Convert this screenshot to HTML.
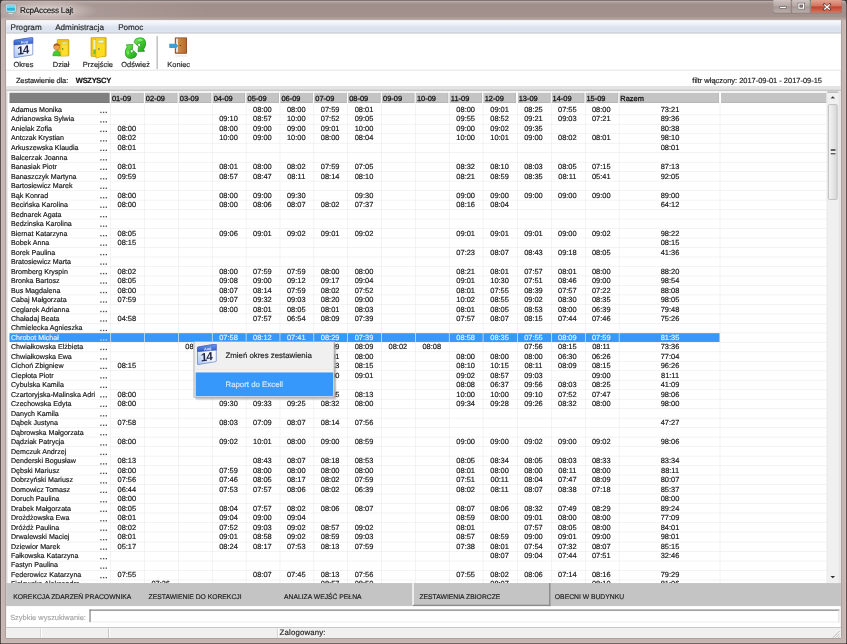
<!DOCTYPE html><html><head><meta charset="utf-8"><style>
*{margin:0;padding:0;box-sizing:border-box}
html,body{width:847px;height:644px;overflow:hidden;background:#3a3434}
#win{position:absolute;left:0;top:0;width:1251px;height:951px;transform-origin:0 0;transform:scale(0.677058,0.677182);
 font-family:"Liberation Sans",sans-serif;font-size:11px;color:#1a1a1a;overflow:hidden}
.t{filter:grayscale(1);-webkit-text-stroke:0.25px currentColor;text-rendering:geometricPrecision}
.a{position:absolute}
.t{position:absolute;white-space:nowrap;line-height:14px}
#wrap{position:absolute;left:0;top:0;width:847px;height:644px;overflow:hidden}
</style></head><body><div id="wrap"><div id="win"><div class="a" style="left:0;top:0;width:1251px;height:951px;background:#c6b5b1;border:1px solid #3c3434;border-top-color:#6e6262;border-radius:7px 7px 0 0;box-shadow:inset 0 0 0 1px #d8ccca"></div>
<div class="a" style="left:1px;top:1px;width:1249px;height:29px;background:linear-gradient(90deg,rgba(255,255,255,0.14),rgba(255,255,255,0) 25%),linear-gradient(#b4a4a0,#a08e8a 20%,#a3918d 80%,#bcaca8);border-radius:6px 6px 0 0"></div>
<div class="a" style="left:2px;top:2px;width:1247px;height:1px;background:#c0b4b2"></div>
<div class="a" style="left:0px;top:1px;width:150px;height:29px;background:radial-gradient(ellipse 75px 16px at 70px 15px,rgba(235,225,222,0.75),rgba(235,225,222,0.35) 60%,rgba(235,225,222,0))"></div>
<div class="a" style="left:8px;top:29px;width:1235px;height:914px;border:1px solid #857672;background:#fff"></div>
<svg class="a" style="left:7px;top:5px" width="18" height="17" viewBox="0 0 18 17">
<rect x="1" y="1" width="16" height="12" rx="2.5" fill="#dfe4e8" stroke="#7f8d96" stroke-width="1"/>
<rect x="3" y="3" width="12" height="8" rx="0.5" fill="#26b6dc"/>
<rect x="3" y="3" width="12" height="3.5" fill="#7adcf0"/>
<path d="M5.5 13.5 L12.5 13.5 L13.5 16 L4.5 16 Z" fill="#e4e8ec" stroke="#8d99a2" stroke-width="0.8"/>
</svg>
<div class="t" style="left:29.5px;top:8px;font-size:12px;letter-spacing:-0.3px;color:#141414;text-shadow:0 0 6px #ece4e2,0 0 3px #ece4e2">RcpAccess Lajt</div>
<div class="a" style="left:1141px;top:0px;width:103px;height:20px;border:1px solid #7a6e6c;border-top:none;border-radius:0 0 5px 5px;overflow:hidden">
<div class="a" style="left:0;top:0;width:27px;height:19px;background:linear-gradient(#cfc4c2,#b3a5a2 50%,#a69794 51%,#b9aeab);border-right:1px solid #8a7e7c"></div>
<div class="a" style="left:28px;top:0;width:27px;height:19px;background:linear-gradient(#cfc4c2,#b3a5a2 50%,#a69794 51%,#b9aeab);border-right:1px solid #8a7e7c"></div>
<div class="a" style="left:56px;top:0;width:47px;height:19px;background:linear-gradient(#e3a493,#d2705a 50%,#c0402a 51%,#d8775f)"></div>
<div class="a" style="left:9px;top:9px;width:11px;height:4px;background:#fff;border:1px solid #5a5050;border-radius:1px"></div>
<div class="a" style="left:36px;top:4px;width:11px;height:10px;border:1px solid #5a5050;background:#fff"><div class="a" style="left:2px;top:2px;width:5px;height:4px;background:#9a8e8c;border:1px solid #5a5050"></div></div>
<svg class="a" style="left:72px;top:4px" width="15" height="12" viewBox="0 0 15 12"><path d="M3.5 2.5 L11.5 10 M11.5 2.5 L3.5 10" stroke="#6a3a30" stroke-width="3.6" stroke-linecap="square"/><path d="M3.5 2.5 L11.5 10 M11.5 2.5 L3.5 10" stroke="#fff" stroke-width="2"/></svg>
</div>
<div class="a" style="left:9px;top:30px;width:1233px;height:20px;background:linear-gradient(#fbfcfe,#eef1f8 30%,#dde4f0 60%,#dbe2ef);border-bottom:3px solid #d2d5db"></div>
<div class="t" style="left:15.5px;top:33px;font-size:12px;color:#1e2432">Program</div>
<div class="t" style="left:81.5px;top:33px;font-size:12px;color:#1e2432">Administracja</div>
<div class="t" style="left:174.5px;top:33px;font-size:12px;color:#1e2432">Pomoc</div>
<div class="a" style="left:9px;top:50px;width:1233px;height:54px;background:#fff;border-bottom:1px solid #d6d6d6"></div>
<div class="a" style="left:231px;top:53px;width:3px;height:49px;background:linear-gradient(90deg,#c4c4c4 66%,#fff 66%)"></div>
<div class="a" style="left:19px;top:55px;width:32px;height:32px"><svg width="32" height="32" viewBox="0 0 32 32">
<defs><linearGradient id="cb" x1="0" y1="0" x2="0" y2="1"><stop offset="0" stop-color="#6f9cf0"/><stop offset="1" stop-color="#2a56c8"/></linearGradient>
<linearGradient id="cw" x1="1" y1="0" x2="0" y2="1"><stop offset="0" stop-color="#ffffff"/><stop offset="0.5" stop-color="#f2f6fe"/><stop offset="1" stop-color="#a8c4f0"/></linearGradient></defs>
<path d="M1.7 5.5 Q1.7 4.6 2.6 4.4 L28.4 0.2 Q29.4 0.1 29.4 1.1 L29.4 25 Q29.4 25.8 28.6 26 L2.7 30.3 Q1.7 30.4 1.7 29.4 Z" fill="url(#cw)" stroke="#4a6cc0" stroke-width="0.9"/>
<path d="M1.7 5.5 Q1.7 4.6 2.6 4.4 L28.4 0.2 Q29.4 0.1 29.4 1.1 L29.4 9 L1.7 11.3 Z" fill="url(#cb)" stroke="#2a4ab0" stroke-width="0.8"/>
<text x="11.5" y="9.2" font-family="Liberation Sans" font-weight="bold" font-size="5.5" fill="#eef4ff" transform="rotate(-8 15 8)">Aug</text>
<text x="8.6" y="24.6" font-family="Liberation Sans" font-weight="bold" font-size="17" fill="#1e2244" transform="rotate(-8 16 20) skewX(-6)" letter-spacing="-1">14</text>
</svg></div>
<div class="t" style="left:-5.399999999999999px;top:89.2px;width:80px;text-align:center;color:#1e1e1e">Okres</div>
<div class="a" style="left:74px;top:55px;width:32px;height:32px"><svg width="32" height="32" viewBox="0 0 32 32">
<path d="M10.5 4 Q10.5 3.4 11.2 3.4 L27 3.4 Q27.8 3.4 27.8 4.2 L27.8 26.6 Q27.8 27.4 27 27.4 L11.2 27.4 Q10.5 27.4 10.5 26.6 Z" fill="#f0c41a" stroke="#c8900a" stroke-width="0.9"/>
<path d="M16 6 L26.5 5.5 L26.5 27.4 L16 28 Z" fill="#ffdf2a" stroke="#d0a010" stroke-width="0.6"/>
<path d="M17.5 7.5 L25 7.2 L25 10 L17.5 10.3 Z" fill="#dff4b8" stroke="#b8a020" stroke-width="0.5"/>
<circle cx="18.6" cy="17.2" r="1.1" fill="#2a7050"/>
<path d="M4 27.6 Q3.8 20 9.6 19.4 Q15 20 15.2 27.6 Z" fill="#4cc830" stroke="#2a9a1a" stroke-width="0.6"/>
<circle cx="9.7" cy="14.2" r="4.6" fill="#f0a050" stroke="#a8600a" stroke-width="0.6"/>
<path d="M5.1 13.5 Q5.5 9.3 9.7 9.4 Q14 9.4 14.3 13.2 Q12 11.5 9 12.3 Q6.8 12.8 5.1 13.5 Z" fill="#a85a10"/>
</svg></div>
<div class="t" style="left:50.2px;top:89.2px;width:80px;text-align:center;color:#1e1e1e">Dział</div>
<div class="a" style="left:130px;top:55px;width:32px;height:32px"><svg width="32" height="32" viewBox="0 0 32 32">
<path d="M4.4 1 Q4.4 -0.2 5.6 -0.2 L25.6 -0.2 Q26.8 -0.2 26.8 1 L26.8 27 Q26.8 28.4 25.6 28.4 L5.6 28.4 Q4.4 28.4 4.4 27 Z" fill="#f0c418" stroke="#c0900a" stroke-width="0.9"/>
<path d="M7.8 4 L11.8 4 L11.8 25 L7.8 25 Z" fill="#e4f4c0"/>
<path d="M7.8 18 L11.8 18 L11.8 25 L7.8 25 Z" fill="#78c030"/>
<path d="M11.6 1.2 L25.4 1 L25.4 27.6 L11.6 31 Z" fill="#ffdc20" stroke="#c89a0a" stroke-width="0.7"/>
<path d="M14.6 4.4 L23.6 4.2 L23.6 8.4 L14.6 8.6 Z" fill="#e8f8c8" stroke="#b0a020" stroke-width="0.6"/>
<circle cx="16" cy="17.4" r="1.2" fill="#1f6a7a"/>
</svg></div>
<div class="t" style="left:104.5px;top:89.2px;width:80px;text-align:center;color:#1e1e1e">Przejście</div>
<div class="a" style="left:184px;top:55px;width:32px;height:32px"><svg width="32" height="32" viewBox="0 0 32 32">
<defs><linearGradient id="gg" x1="0" y1="0" x2="1" y2="1"><stop offset="0" stop-color="#7ee860"/><stop offset="0.5" stop-color="#3cc82c"/><stop offset="1" stop-color="#22a01e"/></linearGradient></defs>
<path d="M13.8 7.5 Q15 1.2 21.5 0.6 Q29.5 0 31 7 Q32 13 28 17.8 L29.6 20.8 L19.8 21.4 L20.6 12.8 L22.6 14.6 Q23.6 12.6 23.2 10.6 Q22.8 8.6 21.4 8.6 Q20.2 8.8 19.6 10.6 L19.4 12.4 Z" fill="url(#gg)" stroke="#1a881a" stroke-width="0.9" stroke-linejoin="round"/>
<path d="M18.2 24.5 Q17 30.8 10.5 31.4 Q2.5 32 1 25 Q0 19 4 14.2 L2.4 11.2 L12.2 10.6 L11.4 19.2 L9.4 17.4 Q8.4 19.4 8.8 21.4 Q9.2 23.4 10.6 23.4 Q11.8 23.2 12.4 21.4 L12.6 19.6 Z" fill="url(#gg)" stroke="#1a881a" stroke-width="0.9" stroke-linejoin="round"/>
<ellipse cx="23" cy="4.2" rx="4" ry="1.6" fill="#c8ffb0" opacity="0.5"/>
<ellipse cx="5.2" cy="23" rx="1.5" ry="3" fill="#c8ffb0" opacity="0.4"/>
</svg></div>
<div class="t" style="left:160.3px;top:89.2px;width:80px;text-align:center;color:#1e1e1e">Odśwież</div>
<div class="a" style="left:248px;top:55px;width:32px;height:32px"><svg width="32" height="32" viewBox="0 0 32 32">
<defs><linearGradient id="dg" x1="0" y1="0" x2="1" y2="0"><stop offset="0" stop-color="#d08a48"/><stop offset="1" stop-color="#b86a2a"/></linearGradient></defs>
<path d="M10.2 1 Q10.2 0 11.2 0 L27.2 0 Q28.2 0 28.2 1 L28.2 23.4 Q28.2 24.4 27.2 24.4 L11.2 24.4 Q10.2 24.4 10.2 23.4 Z" fill="#8a4a22"/>
<path d="M11.8 2 L15 2 L15 22.6 L11.8 22.6 Z" fill="#e6e0dc"/>
<path d="M15 1.6 L27 1.6 L27 23 L15 23 Z" fill="url(#dg)"/>
<circle cx="18.6" cy="12.2" r="0.9" fill="#5a2a10"/>
<path d="M2 9.5 L11 9.5 L11 8 L15.2 12.8 L11 17.4 L11 16 L2 16 Z" fill="#3aa0d8"/>
<path d="M11 26 L28 26 L28 29 L11 29 Z" fill="#f0ebe8" opacity="0.7"/>
</svg></div>
<div class="t" style="left:223.89999999999998px;top:89.2px;width:80px;text-align:center;color:#1e1e1e">Koniec</div>
<div class="t" style="left:23.5px;top:111.5px;color:#1a1a1a;font-size:11px;letter-spacing:-0.15px">Zestawienie dla:</div>
<div class="t" style="left:112px;top:111.5px;color:#101010;font-weight:bold;font-size:11.2px;letter-spacing:-0.5px">WSZYSCY</div>
<div class="t" style="left:900px;top:111.5px;width:314px;text-align:right;color:#222">filtr włączony: 2017-09-01 - 2017-09-15</div>
<div class="a" style="left:9px;top:127px;width:1233px;height:5px;background:#e4e4e4"></div>
<div class="a" style="left:9px;top:132px;width:1233px;height:3px;background:#c8c8c8"></div>
<div class="a" style="left:9px;top:135px;width:1233px;height:726px;background:#fff"></div>
<div class="a" style="left:9px;top:135px;width:2px;height:726px;background:#d4d4d4"></div>
<div class="a" style="left:1238px;top:135px;width:4px;height:726px;background:#e6e6e6"></div>
<div class="a" style="left:14px;top:137px;width:148px;height:15px;background:#808080;border-bottom:1px solid #707070"></div>
<div class="a" style="left:163.9px;top:137px;width:48px;height:15px;background:#c4c4c4;border-bottom:1px solid #b0b0b0;border-right:1px solid #b8b8b8"></div>
<div class="t" style="left:165.4px;top:139.3px;color:#101010;-webkit-text-stroke:0.4px #101010">01-09</div>
<div class="a" style="left:213.95px;top:137px;width:48px;height:15px;background:#c4c4c4;border-bottom:1px solid #b0b0b0;border-right:1px solid #b8b8b8"></div>
<div class="t" style="left:215.45px;top:139.3px;color:#101010;-webkit-text-stroke:0.4px #101010">02-09</div>
<div class="a" style="left:264.0px;top:137px;width:48px;height:15px;background:#c4c4c4;border-bottom:1px solid #b0b0b0;border-right:1px solid #b8b8b8"></div>
<div class="t" style="left:265.5px;top:139.3px;color:#101010;-webkit-text-stroke:0.4px #101010">03-09</div>
<div class="a" style="left:314.04999999999995px;top:137px;width:48px;height:15px;background:#c4c4c4;border-bottom:1px solid #b0b0b0;border-right:1px solid #b8b8b8"></div>
<div class="t" style="left:315.54999999999995px;top:139.3px;color:#101010;-webkit-text-stroke:0.4px #101010">04-09</div>
<div class="a" style="left:364.1px;top:137px;width:48px;height:15px;background:#c4c4c4;border-bottom:1px solid #b0b0b0;border-right:1px solid #b8b8b8"></div>
<div class="t" style="left:365.6px;top:139.3px;color:#101010;-webkit-text-stroke:0.4px #101010">05-09</div>
<div class="a" style="left:414.15px;top:137px;width:48px;height:15px;background:#c4c4c4;border-bottom:1px solid #b0b0b0;border-right:1px solid #b8b8b8"></div>
<div class="t" style="left:415.65px;top:139.3px;color:#101010;-webkit-text-stroke:0.4px #101010">06-09</div>
<div class="a" style="left:464.19999999999993px;top:137px;width:48px;height:15px;background:#c4c4c4;border-bottom:1px solid #b0b0b0;border-right:1px solid #b8b8b8"></div>
<div class="t" style="left:465.69999999999993px;top:139.3px;color:#101010;-webkit-text-stroke:0.4px #101010">07-09</div>
<div class="a" style="left:514.25px;top:137px;width:48px;height:15px;background:#c4c4c4;border-bottom:1px solid #b0b0b0;border-right:1px solid #b8b8b8"></div>
<div class="t" style="left:515.75px;top:139.3px;color:#101010;-webkit-text-stroke:0.4px #101010">08-09</div>
<div class="a" style="left:564.3px;top:137px;width:48px;height:15px;background:#c4c4c4;border-bottom:1px solid #b0b0b0;border-right:1px solid #b8b8b8"></div>
<div class="t" style="left:565.8px;top:139.3px;color:#101010;-webkit-text-stroke:0.4px #101010">09-09</div>
<div class="a" style="left:614.35px;top:137px;width:48px;height:15px;background:#c4c4c4;border-bottom:1px solid #b0b0b0;border-right:1px solid #b8b8b8"></div>
<div class="t" style="left:615.85px;top:139.3px;color:#101010;-webkit-text-stroke:0.4px #101010">10-09</div>
<div class="a" style="left:664.4px;top:137px;width:48px;height:15px;background:#c4c4c4;border-bottom:1px solid #b0b0b0;border-right:1px solid #b8b8b8"></div>
<div class="t" style="left:665.9px;top:139.3px;color:#101010;-webkit-text-stroke:0.4px #101010">11-09</div>
<div class="a" style="left:714.4499999999999px;top:137px;width:48px;height:15px;background:#c4c4c4;border-bottom:1px solid #b0b0b0;border-right:1px solid #b8b8b8"></div>
<div class="t" style="left:715.9499999999999px;top:139.3px;color:#101010;-webkit-text-stroke:0.4px #101010">12-09</div>
<div class="a" style="left:764.4999999999999px;top:137px;width:48px;height:15px;background:#c4c4c4;border-bottom:1px solid #b0b0b0;border-right:1px solid #b8b8b8"></div>
<div class="t" style="left:765.9999999999999px;top:139.3px;color:#101010;-webkit-text-stroke:0.4px #101010">13-09</div>
<div class="a" style="left:814.55px;top:137px;width:48px;height:15px;background:#c4c4c4;border-bottom:1px solid #b0b0b0;border-right:1px solid #b8b8b8"></div>
<div class="t" style="left:816.05px;top:139.3px;color:#101010;-webkit-text-stroke:0.4px #101010">14-09</div>
<div class="a" style="left:864.5999999999999px;top:137px;width:48px;height:15px;background:#c4c4c4;border-bottom:1px solid #b0b0b0;border-right:1px solid #b8b8b8"></div>
<div class="t" style="left:866.0999999999999px;top:139.3px;color:#101010;-webkit-text-stroke:0.4px #101010">15-09</div>
<div class="a" style="left:914.65px;top:137px;width:147px;height:15px;background:#c4c4c4;border-bottom:1px solid #b0b0b0;border-right:1px solid #b8b8b8"></div>
<div class="t" style="left:916.15px;top:139.3px;color:#101010;-webkit-text-stroke:0.4px #101010">Razem</div>
<div class="a" style="left:1065px;top:137px;width:156px;height:15px;background:#c4c4c4;border-bottom:1px solid #b0b0b0"></div>
<div class="a" style="left:14px;top:168.6px;width:1207px;height:1px;background:#ededed"></div>
<div class="t" style="left:16.2px;top:155.4px;color:#141414;font-size:10.5px">Adamus Monika</div>
<div class="a" style="left:147.6px;top:164.79999999999998px;width:2px;height:2px;background:#141414;opacity:0.75"></div>
<div class="a" style="left:152px;top:164.79999999999998px;width:2px;height:2px;background:#141414;opacity:0.75"></div>
<div class="a" style="left:156.4px;top:164.79999999999998px;width:2px;height:2px;background:#141414;opacity:0.75"></div>
<div class="t" style="left:362.5px;top:155.4px;width:50px;text-align:center;color:#141414">08:00</div>
<div class="t" style="left:412.54999999999995px;top:155.4px;width:50px;text-align:center;color:#141414">08:00</div>
<div class="t" style="left:462.5999999999999px;top:155.4px;width:50px;text-align:center;color:#141414">07:59</div>
<div class="t" style="left:512.65px;top:155.4px;width:50px;text-align:center;color:#141414">08:01</div>
<div class="t" style="left:662.8px;top:155.4px;width:50px;text-align:center;color:#141414">08:00</div>
<div class="t" style="left:712.8499999999999px;top:155.4px;width:50px;text-align:center;color:#141414">09:01</div>
<div class="t" style="left:762.8999999999999px;top:155.4px;width:50px;text-align:center;color:#141414">08:25</div>
<div class="t" style="left:812.9499999999999px;top:155.4px;width:50px;text-align:center;color:#141414">07:55</div>
<div class="t" style="left:862.9999999999999px;top:155.4px;width:50px;text-align:center;color:#141414">08:00</div>
<div class="t" style="left:949.65px;top:155.4px;width:80px;text-align:center;color:#141414">73:21</div>
<div class="a" style="left:14px;top:182.62px;width:1207px;height:1px;background:#ededed"></div>
<div class="t" style="left:16.2px;top:169.42000000000002px;color:#141414;font-size:10.5px">Adrianowska Sylwia</div>
<div class="a" style="left:147.6px;top:178.82px;width:2px;height:2px;background:#141414;opacity:0.75"></div>
<div class="a" style="left:152px;top:178.82px;width:2px;height:2px;background:#141414;opacity:0.75"></div>
<div class="a" style="left:156.4px;top:178.82px;width:2px;height:2px;background:#141414;opacity:0.75"></div>
<div class="t" style="left:312.44999999999993px;top:169.42000000000002px;width:50px;text-align:center;color:#141414">09:10</div>
<div class="t" style="left:362.5px;top:169.42000000000002px;width:50px;text-align:center;color:#141414">08:57</div>
<div class="t" style="left:412.54999999999995px;top:169.42000000000002px;width:50px;text-align:center;color:#141414">10:00</div>
<div class="t" style="left:462.5999999999999px;top:169.42000000000002px;width:50px;text-align:center;color:#141414">07:52</div>
<div class="t" style="left:512.65px;top:169.42000000000002px;width:50px;text-align:center;color:#141414">09:05</div>
<div class="t" style="left:662.8px;top:169.42000000000002px;width:50px;text-align:center;color:#141414">09:55</div>
<div class="t" style="left:712.8499999999999px;top:169.42000000000002px;width:50px;text-align:center;color:#141414">08:52</div>
<div class="t" style="left:762.8999999999999px;top:169.42000000000002px;width:50px;text-align:center;color:#141414">09:21</div>
<div class="t" style="left:812.9499999999999px;top:169.42000000000002px;width:50px;text-align:center;color:#141414">09:03</div>
<div class="t" style="left:862.9999999999999px;top:169.42000000000002px;width:50px;text-align:center;color:#141414">07:21</div>
<div class="t" style="left:949.65px;top:169.42000000000002px;width:80px;text-align:center;color:#141414">89:36</div>
<div class="a" style="left:14px;top:196.64px;width:1207px;height:1px;background:#ededed"></div>
<div class="t" style="left:16.2px;top:183.44px;color:#141414;font-size:10.5px">Anielak Zofia</div>
<div class="a" style="left:147.6px;top:192.83999999999997px;width:2px;height:2px;background:#141414;opacity:0.75"></div>
<div class="a" style="left:152px;top:192.83999999999997px;width:2px;height:2px;background:#141414;opacity:0.75"></div>
<div class="a" style="left:156.4px;top:192.83999999999997px;width:2px;height:2px;background:#141414;opacity:0.75"></div>
<div class="t" style="left:162.3px;top:183.44px;width:50px;text-align:center;color:#141414">08:00</div>
<div class="t" style="left:312.44999999999993px;top:183.44px;width:50px;text-align:center;color:#141414">08:00</div>
<div class="t" style="left:362.5px;top:183.44px;width:50px;text-align:center;color:#141414">09:00</div>
<div class="t" style="left:412.54999999999995px;top:183.44px;width:50px;text-align:center;color:#141414">09:00</div>
<div class="t" style="left:462.5999999999999px;top:183.44px;width:50px;text-align:center;color:#141414">09:01</div>
<div class="t" style="left:512.65px;top:183.44px;width:50px;text-align:center;color:#141414">10:00</div>
<div class="t" style="left:662.8px;top:183.44px;width:50px;text-align:center;color:#141414">09:00</div>
<div class="t" style="left:712.8499999999999px;top:183.44px;width:50px;text-align:center;color:#141414">09:02</div>
<div class="t" style="left:762.8999999999999px;top:183.44px;width:50px;text-align:center;color:#141414">09:35</div>
<div class="t" style="left:949.65px;top:183.44px;width:80px;text-align:center;color:#141414">80:38</div>
<div class="a" style="left:14px;top:210.66px;width:1207px;height:1px;background:#ededed"></div>
<div class="t" style="left:16.2px;top:197.46px;color:#141414;font-size:10.5px">Antczak Krystian</div>
<div class="a" style="left:147.6px;top:206.85999999999999px;width:2px;height:2px;background:#141414;opacity:0.75"></div>
<div class="a" style="left:152px;top:206.85999999999999px;width:2px;height:2px;background:#141414;opacity:0.75"></div>
<div class="a" style="left:156.4px;top:206.85999999999999px;width:2px;height:2px;background:#141414;opacity:0.75"></div>
<div class="t" style="left:162.3px;top:197.46px;width:50px;text-align:center;color:#141414">08:02</div>
<div class="t" style="left:312.44999999999993px;top:197.46px;width:50px;text-align:center;color:#141414">10:00</div>
<div class="t" style="left:362.5px;top:197.46px;width:50px;text-align:center;color:#141414">09:00</div>
<div class="t" style="left:412.54999999999995px;top:197.46px;width:50px;text-align:center;color:#141414">10:00</div>
<div class="t" style="left:462.5999999999999px;top:197.46px;width:50px;text-align:center;color:#141414">08:00</div>
<div class="t" style="left:512.65px;top:197.46px;width:50px;text-align:center;color:#141414">08:04</div>
<div class="t" style="left:662.8px;top:197.46px;width:50px;text-align:center;color:#141414">10:00</div>
<div class="t" style="left:712.8499999999999px;top:197.46px;width:50px;text-align:center;color:#141414">10:01</div>
<div class="t" style="left:762.8999999999999px;top:197.46px;width:50px;text-align:center;color:#141414">09:00</div>
<div class="t" style="left:812.9499999999999px;top:197.46px;width:50px;text-align:center;color:#141414">08:02</div>
<div class="t" style="left:862.9999999999999px;top:197.46px;width:50px;text-align:center;color:#141414">08:01</div>
<div class="t" style="left:949.65px;top:197.46px;width:80px;text-align:center;color:#141414">98:10</div>
<div class="a" style="left:14px;top:224.68px;width:1207px;height:1px;background:#ededed"></div>
<div class="t" style="left:16.2px;top:211.48000000000002px;color:#141414;font-size:10.5px">Arkuszewska Klaudia</div>
<div class="a" style="left:147.6px;top:220.88px;width:2px;height:2px;background:#141414;opacity:0.75"></div>
<div class="a" style="left:152px;top:220.88px;width:2px;height:2px;background:#141414;opacity:0.75"></div>
<div class="a" style="left:156.4px;top:220.88px;width:2px;height:2px;background:#141414;opacity:0.75"></div>
<div class="t" style="left:162.3px;top:211.48000000000002px;width:50px;text-align:center;color:#141414">08:01</div>
<div class="t" style="left:949.65px;top:211.48000000000002px;width:80px;text-align:center;color:#141414">08:01</div>
<div class="a" style="left:14px;top:238.7px;width:1207px;height:1px;background:#ededed"></div>
<div class="t" style="left:16.2px;top:225.5px;color:#141414;font-size:10.5px">Balcerzak Joanna</div>
<div class="a" style="left:147.6px;top:234.89999999999998px;width:2px;height:2px;background:#141414;opacity:0.75"></div>
<div class="a" style="left:152px;top:234.89999999999998px;width:2px;height:2px;background:#141414;opacity:0.75"></div>
<div class="a" style="left:156.4px;top:234.89999999999998px;width:2px;height:2px;background:#141414;opacity:0.75"></div>
<div class="a" style="left:14px;top:252.72px;width:1207px;height:1px;background:#ededed"></div>
<div class="t" style="left:16.2px;top:239.52px;color:#141414;font-size:10.5px">Banasiak Piotr</div>
<div class="a" style="left:147.6px;top:248.92px;width:2px;height:2px;background:#141414;opacity:0.75"></div>
<div class="a" style="left:152px;top:248.92px;width:2px;height:2px;background:#141414;opacity:0.75"></div>
<div class="a" style="left:156.4px;top:248.92px;width:2px;height:2px;background:#141414;opacity:0.75"></div>
<div class="t" style="left:162.3px;top:239.52px;width:50px;text-align:center;color:#141414">08:01</div>
<div class="t" style="left:312.44999999999993px;top:239.52px;width:50px;text-align:center;color:#141414">08:01</div>
<div class="t" style="left:362.5px;top:239.52px;width:50px;text-align:center;color:#141414">08:00</div>
<div class="t" style="left:412.54999999999995px;top:239.52px;width:50px;text-align:center;color:#141414">08:02</div>
<div class="t" style="left:462.5999999999999px;top:239.52px;width:50px;text-align:center;color:#141414">07:59</div>
<div class="t" style="left:512.65px;top:239.52px;width:50px;text-align:center;color:#141414">07:05</div>
<div class="t" style="left:662.8px;top:239.52px;width:50px;text-align:center;color:#141414">08:32</div>
<div class="t" style="left:712.8499999999999px;top:239.52px;width:50px;text-align:center;color:#141414">08:10</div>
<div class="t" style="left:762.8999999999999px;top:239.52px;width:50px;text-align:center;color:#141414">08:03</div>
<div class="t" style="left:812.9499999999999px;top:239.52px;width:50px;text-align:center;color:#141414">08:05</div>
<div class="t" style="left:862.9999999999999px;top:239.52px;width:50px;text-align:center;color:#141414">07:15</div>
<div class="t" style="left:949.65px;top:239.52px;width:80px;text-align:center;color:#141414">87:13</div>
<div class="a" style="left:14px;top:266.74px;width:1207px;height:1px;background:#ededed"></div>
<div class="t" style="left:16.2px;top:253.54000000000002px;color:#141414;font-size:10.5px">Banaszczyk Martyna</div>
<div class="a" style="left:147.6px;top:262.94px;width:2px;height:2px;background:#141414;opacity:0.75"></div>
<div class="a" style="left:152px;top:262.94px;width:2px;height:2px;background:#141414;opacity:0.75"></div>
<div class="a" style="left:156.4px;top:262.94px;width:2px;height:2px;background:#141414;opacity:0.75"></div>
<div class="t" style="left:162.3px;top:253.54000000000002px;width:50px;text-align:center;color:#141414">09:59</div>
<div class="t" style="left:312.44999999999993px;top:253.54000000000002px;width:50px;text-align:center;color:#141414">08:57</div>
<div class="t" style="left:362.5px;top:253.54000000000002px;width:50px;text-align:center;color:#141414">08:47</div>
<div class="t" style="left:412.54999999999995px;top:253.54000000000002px;width:50px;text-align:center;color:#141414">08:11</div>
<div class="t" style="left:462.5999999999999px;top:253.54000000000002px;width:50px;text-align:center;color:#141414">08:14</div>
<div class="t" style="left:512.65px;top:253.54000000000002px;width:50px;text-align:center;color:#141414">08:10</div>
<div class="t" style="left:662.8px;top:253.54000000000002px;width:50px;text-align:center;color:#141414">08:21</div>
<div class="t" style="left:712.8499999999999px;top:253.54000000000002px;width:50px;text-align:center;color:#141414">08:59</div>
<div class="t" style="left:762.8999999999999px;top:253.54000000000002px;width:50px;text-align:center;color:#141414">08:35</div>
<div class="t" style="left:812.9499999999999px;top:253.54000000000002px;width:50px;text-align:center;color:#141414">08:11</div>
<div class="t" style="left:862.9999999999999px;top:253.54000000000002px;width:50px;text-align:center;color:#141414">05:41</div>
<div class="t" style="left:949.65px;top:253.54000000000002px;width:80px;text-align:center;color:#141414">92:05</div>
<div class="a" style="left:14px;top:280.76px;width:1207px;height:1px;background:#ededed"></div>
<div class="t" style="left:16.2px;top:267.56px;color:#141414;font-size:10.5px">Bartosiewicz Marek</div>
<div class="a" style="left:147.6px;top:276.96px;width:2px;height:2px;background:#141414;opacity:0.75"></div>
<div class="a" style="left:152px;top:276.96px;width:2px;height:2px;background:#141414;opacity:0.75"></div>
<div class="a" style="left:156.4px;top:276.96px;width:2px;height:2px;background:#141414;opacity:0.75"></div>
<div class="a" style="left:14px;top:294.78px;width:1207px;height:1px;background:#ededed"></div>
<div class="t" style="left:16.2px;top:281.58px;color:#141414;font-size:10.5px">Bąk Konrad</div>
<div class="a" style="left:147.6px;top:290.97999999999996px;width:2px;height:2px;background:#141414;opacity:0.75"></div>
<div class="a" style="left:152px;top:290.97999999999996px;width:2px;height:2px;background:#141414;opacity:0.75"></div>
<div class="a" style="left:156.4px;top:290.97999999999996px;width:2px;height:2px;background:#141414;opacity:0.75"></div>
<div class="t" style="left:162.3px;top:281.58px;width:50px;text-align:center;color:#141414">08:00</div>
<div class="t" style="left:312.44999999999993px;top:281.58px;width:50px;text-align:center;color:#141414">08:00</div>
<div class="t" style="left:362.5px;top:281.58px;width:50px;text-align:center;color:#141414">09:00</div>
<div class="t" style="left:412.54999999999995px;top:281.58px;width:50px;text-align:center;color:#141414">09:30</div>
<div class="t" style="left:512.65px;top:281.58px;width:50px;text-align:center;color:#141414">09:30</div>
<div class="t" style="left:662.8px;top:281.58px;width:50px;text-align:center;color:#141414">09:00</div>
<div class="t" style="left:712.8499999999999px;top:281.58px;width:50px;text-align:center;color:#141414">09:00</div>
<div class="t" style="left:762.8999999999999px;top:281.58px;width:50px;text-align:center;color:#141414">09:00</div>
<div class="t" style="left:812.9499999999999px;top:281.58px;width:50px;text-align:center;color:#141414">09:00</div>
<div class="t" style="left:862.9999999999999px;top:281.58px;width:50px;text-align:center;color:#141414">09:00</div>
<div class="t" style="left:949.65px;top:281.58px;width:80px;text-align:center;color:#141414">89:00</div>
<div class="a" style="left:14px;top:308.79999999999995px;width:1207px;height:1px;background:#ededed"></div>
<div class="t" style="left:16.2px;top:295.59999999999997px;color:#141414;font-size:10.5px">Becińska Karolina</div>
<div class="a" style="left:147.6px;top:304.99999999999994px;width:2px;height:2px;background:#141414;opacity:0.75"></div>
<div class="a" style="left:152px;top:304.99999999999994px;width:2px;height:2px;background:#141414;opacity:0.75"></div>
<div class="a" style="left:156.4px;top:304.99999999999994px;width:2px;height:2px;background:#141414;opacity:0.75"></div>
<div class="t" style="left:162.3px;top:295.59999999999997px;width:50px;text-align:center;color:#141414">08:00</div>
<div class="t" style="left:312.44999999999993px;top:295.59999999999997px;width:50px;text-align:center;color:#141414">08:00</div>
<div class="t" style="left:362.5px;top:295.59999999999997px;width:50px;text-align:center;color:#141414">08:06</div>
<div class="t" style="left:412.54999999999995px;top:295.59999999999997px;width:50px;text-align:center;color:#141414">08:07</div>
<div class="t" style="left:462.5999999999999px;top:295.59999999999997px;width:50px;text-align:center;color:#141414">08:02</div>
<div class="t" style="left:512.65px;top:295.59999999999997px;width:50px;text-align:center;color:#141414">07:37</div>
<div class="t" style="left:662.8px;top:295.59999999999997px;width:50px;text-align:center;color:#141414">08:16</div>
<div class="t" style="left:712.8499999999999px;top:295.59999999999997px;width:50px;text-align:center;color:#141414">08:04</div>
<div class="t" style="left:949.65px;top:295.59999999999997px;width:80px;text-align:center;color:#141414">64:12</div>
<div class="a" style="left:14px;top:322.82px;width:1207px;height:1px;background:#ededed"></div>
<div class="t" style="left:16.2px;top:309.62px;color:#141414;font-size:10.5px">Bednarek Agata</div>
<div class="a" style="left:147.6px;top:319.02px;width:2px;height:2px;background:#141414;opacity:0.75"></div>
<div class="a" style="left:152px;top:319.02px;width:2px;height:2px;background:#141414;opacity:0.75"></div>
<div class="a" style="left:156.4px;top:319.02px;width:2px;height:2px;background:#141414;opacity:0.75"></div>
<div class="a" style="left:14px;top:336.84000000000003px;width:1207px;height:1px;background:#ededed"></div>
<div class="t" style="left:16.2px;top:323.64000000000004px;color:#141414;font-size:10.5px">Bedzinska Karolina</div>
<div class="a" style="left:147.6px;top:333.04px;width:2px;height:2px;background:#141414;opacity:0.75"></div>
<div class="a" style="left:152px;top:333.04px;width:2px;height:2px;background:#141414;opacity:0.75"></div>
<div class="a" style="left:156.4px;top:333.04px;width:2px;height:2px;background:#141414;opacity:0.75"></div>
<div class="a" style="left:14px;top:350.86px;width:1207px;height:1px;background:#ededed"></div>
<div class="t" style="left:16.2px;top:337.66px;color:#141414;font-size:10.5px">Biernat Katarzyna</div>
<div class="a" style="left:147.6px;top:347.06px;width:2px;height:2px;background:#141414;opacity:0.75"></div>
<div class="a" style="left:152px;top:347.06px;width:2px;height:2px;background:#141414;opacity:0.75"></div>
<div class="a" style="left:156.4px;top:347.06px;width:2px;height:2px;background:#141414;opacity:0.75"></div>
<div class="t" style="left:162.3px;top:337.66px;width:50px;text-align:center;color:#141414">08:05</div>
<div class="t" style="left:312.44999999999993px;top:337.66px;width:50px;text-align:center;color:#141414">09:06</div>
<div class="t" style="left:362.5px;top:337.66px;width:50px;text-align:center;color:#141414">09:01</div>
<div class="t" style="left:412.54999999999995px;top:337.66px;width:50px;text-align:center;color:#141414">09:02</div>
<div class="t" style="left:462.5999999999999px;top:337.66px;width:50px;text-align:center;color:#141414">09:01</div>
<div class="t" style="left:512.65px;top:337.66px;width:50px;text-align:center;color:#141414">09:02</div>
<div class="t" style="left:662.8px;top:337.66px;width:50px;text-align:center;color:#141414">09:01</div>
<div class="t" style="left:712.8499999999999px;top:337.66px;width:50px;text-align:center;color:#141414">09:01</div>
<div class="t" style="left:762.8999999999999px;top:337.66px;width:50px;text-align:center;color:#141414">09:01</div>
<div class="t" style="left:812.9499999999999px;top:337.66px;width:50px;text-align:center;color:#141414">09:00</div>
<div class="t" style="left:862.9999999999999px;top:337.66px;width:50px;text-align:center;color:#141414">09:02</div>
<div class="t" style="left:949.65px;top:337.66px;width:80px;text-align:center;color:#141414">98:22</div>
<div class="a" style="left:14px;top:364.88px;width:1207px;height:1px;background:#ededed"></div>
<div class="t" style="left:16.2px;top:351.68px;color:#141414;font-size:10.5px">Bobek Anna</div>
<div class="a" style="left:147.6px;top:361.08px;width:2px;height:2px;background:#141414;opacity:0.75"></div>
<div class="a" style="left:152px;top:361.08px;width:2px;height:2px;background:#141414;opacity:0.75"></div>
<div class="a" style="left:156.4px;top:361.08px;width:2px;height:2px;background:#141414;opacity:0.75"></div>
<div class="t" style="left:162.3px;top:351.68px;width:50px;text-align:center;color:#141414">08:15</div>
<div class="t" style="left:949.65px;top:351.68px;width:80px;text-align:center;color:#141414">08:15</div>
<div class="a" style="left:14px;top:378.9px;width:1207px;height:1px;background:#ededed"></div>
<div class="t" style="left:16.2px;top:365.7px;color:#141414;font-size:10.5px">Borek Paulina</div>
<div class="a" style="left:147.6px;top:375.09999999999997px;width:2px;height:2px;background:#141414;opacity:0.75"></div>
<div class="a" style="left:152px;top:375.09999999999997px;width:2px;height:2px;background:#141414;opacity:0.75"></div>
<div class="a" style="left:156.4px;top:375.09999999999997px;width:2px;height:2px;background:#141414;opacity:0.75"></div>
<div class="t" style="left:662.8px;top:365.7px;width:50px;text-align:center;color:#141414">07:23</div>
<div class="t" style="left:712.8499999999999px;top:365.7px;width:50px;text-align:center;color:#141414">08:07</div>
<div class="t" style="left:762.8999999999999px;top:365.7px;width:50px;text-align:center;color:#141414">08:43</div>
<div class="t" style="left:812.9499999999999px;top:365.7px;width:50px;text-align:center;color:#141414">09:18</div>
<div class="t" style="left:862.9999999999999px;top:365.7px;width:50px;text-align:center;color:#141414">08:05</div>
<div class="t" style="left:949.65px;top:365.7px;width:80px;text-align:center;color:#141414">41:36</div>
<div class="a" style="left:14px;top:392.91999999999996px;width:1207px;height:1px;background:#ededed"></div>
<div class="t" style="left:16.2px;top:379.71999999999997px;color:#141414;font-size:10.5px">Bratosiewicz Marta</div>
<div class="a" style="left:147.6px;top:389.11999999999995px;width:2px;height:2px;background:#141414;opacity:0.75"></div>
<div class="a" style="left:152px;top:389.11999999999995px;width:2px;height:2px;background:#141414;opacity:0.75"></div>
<div class="a" style="left:156.4px;top:389.11999999999995px;width:2px;height:2px;background:#141414;opacity:0.75"></div>
<div class="a" style="left:14px;top:406.94px;width:1207px;height:1px;background:#ededed"></div>
<div class="t" style="left:16.2px;top:393.74px;color:#141414;font-size:10.5px">Bromberg Kryspin</div>
<div class="a" style="left:147.6px;top:403.14px;width:2px;height:2px;background:#141414;opacity:0.75"></div>
<div class="a" style="left:152px;top:403.14px;width:2px;height:2px;background:#141414;opacity:0.75"></div>
<div class="a" style="left:156.4px;top:403.14px;width:2px;height:2px;background:#141414;opacity:0.75"></div>
<div class="t" style="left:162.3px;top:393.74px;width:50px;text-align:center;color:#141414">08:02</div>
<div class="t" style="left:312.44999999999993px;top:393.74px;width:50px;text-align:center;color:#141414">08:00</div>
<div class="t" style="left:362.5px;top:393.74px;width:50px;text-align:center;color:#141414">07:59</div>
<div class="t" style="left:412.54999999999995px;top:393.74px;width:50px;text-align:center;color:#141414">07:59</div>
<div class="t" style="left:462.5999999999999px;top:393.74px;width:50px;text-align:center;color:#141414">08:00</div>
<div class="t" style="left:512.65px;top:393.74px;width:50px;text-align:center;color:#141414">08:00</div>
<div class="t" style="left:662.8px;top:393.74px;width:50px;text-align:center;color:#141414">08:21</div>
<div class="t" style="left:712.8499999999999px;top:393.74px;width:50px;text-align:center;color:#141414">08:01</div>
<div class="t" style="left:762.8999999999999px;top:393.74px;width:50px;text-align:center;color:#141414">07:57</div>
<div class="t" style="left:812.9499999999999px;top:393.74px;width:50px;text-align:center;color:#141414">08:01</div>
<div class="t" style="left:862.9999999999999px;top:393.74px;width:50px;text-align:center;color:#141414">08:00</div>
<div class="t" style="left:949.65px;top:393.74px;width:80px;text-align:center;color:#141414">88:20</div>
<div class="a" style="left:14px;top:420.96px;width:1207px;height:1px;background:#ededed"></div>
<div class="t" style="left:16.2px;top:407.76px;color:#141414;font-size:10.5px">Bronka Bartosz</div>
<div class="a" style="left:147.6px;top:417.15999999999997px;width:2px;height:2px;background:#141414;opacity:0.75"></div>
<div class="a" style="left:152px;top:417.15999999999997px;width:2px;height:2px;background:#141414;opacity:0.75"></div>
<div class="a" style="left:156.4px;top:417.15999999999997px;width:2px;height:2px;background:#141414;opacity:0.75"></div>
<div class="t" style="left:162.3px;top:407.76px;width:50px;text-align:center;color:#141414">08:05</div>
<div class="t" style="left:312.44999999999993px;top:407.76px;width:50px;text-align:center;color:#141414">09:08</div>
<div class="t" style="left:362.5px;top:407.76px;width:50px;text-align:center;color:#141414">09:00</div>
<div class="t" style="left:412.54999999999995px;top:407.76px;width:50px;text-align:center;color:#141414">09:12</div>
<div class="t" style="left:462.5999999999999px;top:407.76px;width:50px;text-align:center;color:#141414">09:17</div>
<div class="t" style="left:512.65px;top:407.76px;width:50px;text-align:center;color:#141414">09:04</div>
<div class="t" style="left:662.8px;top:407.76px;width:50px;text-align:center;color:#141414">09:01</div>
<div class="t" style="left:712.8499999999999px;top:407.76px;width:50px;text-align:center;color:#141414">10:30</div>
<div class="t" style="left:762.8999999999999px;top:407.76px;width:50px;text-align:center;color:#141414">07:51</div>
<div class="t" style="left:812.9499999999999px;top:407.76px;width:50px;text-align:center;color:#141414">08:46</div>
<div class="t" style="left:862.9999999999999px;top:407.76px;width:50px;text-align:center;color:#141414">09:00</div>
<div class="t" style="left:949.65px;top:407.76px;width:80px;text-align:center;color:#141414">98:54</div>
<div class="a" style="left:14px;top:434.98px;width:1207px;height:1px;background:#ededed"></div>
<div class="t" style="left:16.2px;top:421.78000000000003px;color:#141414;font-size:10.5px">Bus Magdalena</div>
<div class="a" style="left:147.6px;top:431.18px;width:2px;height:2px;background:#141414;opacity:0.75"></div>
<div class="a" style="left:152px;top:431.18px;width:2px;height:2px;background:#141414;opacity:0.75"></div>
<div class="a" style="left:156.4px;top:431.18px;width:2px;height:2px;background:#141414;opacity:0.75"></div>
<div class="t" style="left:162.3px;top:421.78000000000003px;width:50px;text-align:center;color:#141414">08:00</div>
<div class="t" style="left:312.44999999999993px;top:421.78000000000003px;width:50px;text-align:center;color:#141414">08:07</div>
<div class="t" style="left:362.5px;top:421.78000000000003px;width:50px;text-align:center;color:#141414">08:14</div>
<div class="t" style="left:412.54999999999995px;top:421.78000000000003px;width:50px;text-align:center;color:#141414">07:59</div>
<div class="t" style="left:462.5999999999999px;top:421.78000000000003px;width:50px;text-align:center;color:#141414">08:02</div>
<div class="t" style="left:512.65px;top:421.78000000000003px;width:50px;text-align:center;color:#141414">07:52</div>
<div class="t" style="left:662.8px;top:421.78000000000003px;width:50px;text-align:center;color:#141414">08:01</div>
<div class="t" style="left:712.8499999999999px;top:421.78000000000003px;width:50px;text-align:center;color:#141414">07:55</div>
<div class="t" style="left:762.8999999999999px;top:421.78000000000003px;width:50px;text-align:center;color:#141414">08:39</div>
<div class="t" style="left:812.9499999999999px;top:421.78000000000003px;width:50px;text-align:center;color:#141414">07:57</div>
<div class="t" style="left:862.9999999999999px;top:421.78000000000003px;width:50px;text-align:center;color:#141414">07:22</div>
<div class="t" style="left:949.65px;top:421.78000000000003px;width:80px;text-align:center;color:#141414">88:08</div>
<div class="a" style="left:14px;top:449.0px;width:1207px;height:1px;background:#ededed"></div>
<div class="t" style="left:16.2px;top:435.8px;color:#141414;font-size:10.5px">Cabaj Małgorzata</div>
<div class="a" style="left:147.6px;top:445.2px;width:2px;height:2px;background:#141414;opacity:0.75"></div>
<div class="a" style="left:152px;top:445.2px;width:2px;height:2px;background:#141414;opacity:0.75"></div>
<div class="a" style="left:156.4px;top:445.2px;width:2px;height:2px;background:#141414;opacity:0.75"></div>
<div class="t" style="left:162.3px;top:435.8px;width:50px;text-align:center;color:#141414">07:59</div>
<div class="t" style="left:312.44999999999993px;top:435.8px;width:50px;text-align:center;color:#141414">09:07</div>
<div class="t" style="left:362.5px;top:435.8px;width:50px;text-align:center;color:#141414">09:32</div>
<div class="t" style="left:412.54999999999995px;top:435.8px;width:50px;text-align:center;color:#141414">09:03</div>
<div class="t" style="left:462.5999999999999px;top:435.8px;width:50px;text-align:center;color:#141414">08:20</div>
<div class="t" style="left:512.65px;top:435.8px;width:50px;text-align:center;color:#141414">09:00</div>
<div class="t" style="left:662.8px;top:435.8px;width:50px;text-align:center;color:#141414">10:02</div>
<div class="t" style="left:712.8499999999999px;top:435.8px;width:50px;text-align:center;color:#141414">08:55</div>
<div class="t" style="left:762.8999999999999px;top:435.8px;width:50px;text-align:center;color:#141414">09:02</div>
<div class="t" style="left:812.9499999999999px;top:435.8px;width:50px;text-align:center;color:#141414">08:30</div>
<div class="t" style="left:862.9999999999999px;top:435.8px;width:50px;text-align:center;color:#141414">08:35</div>
<div class="t" style="left:949.65px;top:435.8px;width:80px;text-align:center;color:#141414">98:05</div>
<div class="a" style="left:14px;top:463.02px;width:1207px;height:1px;background:#ededed"></div>
<div class="t" style="left:16.2px;top:449.82px;color:#141414;font-size:10.5px">Ceglarek Adrianna</div>
<div class="a" style="left:147.6px;top:459.21999999999997px;width:2px;height:2px;background:#141414;opacity:0.75"></div>
<div class="a" style="left:152px;top:459.21999999999997px;width:2px;height:2px;background:#141414;opacity:0.75"></div>
<div class="a" style="left:156.4px;top:459.21999999999997px;width:2px;height:2px;background:#141414;opacity:0.75"></div>
<div class="t" style="left:312.44999999999993px;top:449.82px;width:50px;text-align:center;color:#141414">08:00</div>
<div class="t" style="left:362.5px;top:449.82px;width:50px;text-align:center;color:#141414">08:01</div>
<div class="t" style="left:412.54999999999995px;top:449.82px;width:50px;text-align:center;color:#141414">08:05</div>
<div class="t" style="left:462.5999999999999px;top:449.82px;width:50px;text-align:center;color:#141414">08:01</div>
<div class="t" style="left:512.65px;top:449.82px;width:50px;text-align:center;color:#141414">08:03</div>
<div class="t" style="left:662.8px;top:449.82px;width:50px;text-align:center;color:#141414">08:01</div>
<div class="t" style="left:712.8499999999999px;top:449.82px;width:50px;text-align:center;color:#141414">08:05</div>
<div class="t" style="left:762.8999999999999px;top:449.82px;width:50px;text-align:center;color:#141414">08:53</div>
<div class="t" style="left:812.9499999999999px;top:449.82px;width:50px;text-align:center;color:#141414">08:00</div>
<div class="t" style="left:862.9999999999999px;top:449.82px;width:50px;text-align:center;color:#141414">06:39</div>
<div class="t" style="left:949.65px;top:449.82px;width:80px;text-align:center;color:#141414">79:48</div>
<div class="a" style="left:14px;top:477.03999999999996px;width:1207px;height:1px;background:#ededed"></div>
<div class="t" style="left:16.2px;top:463.84px;color:#141414;font-size:10.5px">Chaładaj Beata</div>
<div class="a" style="left:147.6px;top:473.23999999999995px;width:2px;height:2px;background:#141414;opacity:0.75"></div>
<div class="a" style="left:152px;top:473.23999999999995px;width:2px;height:2px;background:#141414;opacity:0.75"></div>
<div class="a" style="left:156.4px;top:473.23999999999995px;width:2px;height:2px;background:#141414;opacity:0.75"></div>
<div class="t" style="left:162.3px;top:463.84px;width:50px;text-align:center;color:#141414">04:58</div>
<div class="t" style="left:362.5px;top:463.84px;width:50px;text-align:center;color:#141414">07:57</div>
<div class="t" style="left:412.54999999999995px;top:463.84px;width:50px;text-align:center;color:#141414">06:54</div>
<div class="t" style="left:462.5999999999999px;top:463.84px;width:50px;text-align:center;color:#141414">08:09</div>
<div class="t" style="left:512.65px;top:463.84px;width:50px;text-align:center;color:#141414">07:39</div>
<div class="t" style="left:662.8px;top:463.84px;width:50px;text-align:center;color:#141414">07:57</div>
<div class="t" style="left:712.8499999999999px;top:463.84px;width:50px;text-align:center;color:#141414">08:07</div>
<div class="t" style="left:762.8999999999999px;top:463.84px;width:50px;text-align:center;color:#141414">08:15</div>
<div class="t" style="left:812.9499999999999px;top:463.84px;width:50px;text-align:center;color:#141414">07:44</div>
<div class="t" style="left:862.9999999999999px;top:463.84px;width:50px;text-align:center;color:#141414">07:46</div>
<div class="t" style="left:949.65px;top:463.84px;width:80px;text-align:center;color:#141414">75:26</div>
<div class="a" style="left:14px;top:491.05999999999995px;width:1207px;height:1px;background:#ededed"></div>
<div class="t" style="left:16.2px;top:477.85999999999996px;color:#141414;font-size:10.5px">Chmielecka Agnieszka</div>
<div class="a" style="left:147.6px;top:487.25999999999993px;width:2px;height:2px;background:#141414;opacity:0.75"></div>
<div class="a" style="left:152px;top:487.25999999999993px;width:2px;height:2px;background:#141414;opacity:0.75"></div>
<div class="a" style="left:156.4px;top:487.25999999999993px;width:2px;height:2px;background:#141414;opacity:0.75"></div>
<div class="a" style="left:14px;top:492.08000000000004px;width:1049px;height:13px;background:#3598fa"></div>
<div class="a" style="left:14px;top:505.08000000000004px;width:1207px;height:1px;background:#ededed"></div>
<div class="t" style="left:16.2px;top:491.88000000000005px;color:#e6f0fc;filter:none;font-size:10.5px">Chrobot Michał</div>
<div class="a" style="left:147.6px;top:501.28000000000003px;width:2px;height:2px;background:#e6f0fc;filter:none;opacity:0.75"></div>
<div class="a" style="left:152px;top:501.28000000000003px;width:2px;height:2px;background:#e6f0fc;filter:none;opacity:0.75"></div>
<div class="a" style="left:156.4px;top:501.28000000000003px;width:2px;height:2px;background:#e6f0fc;filter:none;opacity:0.75"></div>
<div class="t" style="left:312.44999999999993px;top:491.88000000000005px;width:50px;text-align:center;color:#e6f0fc;filter:none">07:58</div>
<div class="t" style="left:362.5px;top:491.88000000000005px;width:50px;text-align:center;color:#e6f0fc;filter:none">08:12</div>
<div class="t" style="left:412.54999999999995px;top:491.88000000000005px;width:50px;text-align:center;color:#e6f0fc;filter:none">07:41</div>
<div class="t" style="left:462.5999999999999px;top:491.88000000000005px;width:50px;text-align:center;color:#e6f0fc;filter:none">08:29</div>
<div class="t" style="left:512.65px;top:491.88000000000005px;width:50px;text-align:center;color:#e6f0fc;filter:none">07:39</div>
<div class="t" style="left:662.8px;top:491.88000000000005px;width:50px;text-align:center;color:#e6f0fc;filter:none">08:58</div>
<div class="t" style="left:712.8499999999999px;top:491.88000000000005px;width:50px;text-align:center;color:#e6f0fc;filter:none">08:35</div>
<div class="t" style="left:762.8999999999999px;top:491.88000000000005px;width:50px;text-align:center;color:#e6f0fc;filter:none">07:55</div>
<div class="t" style="left:812.9499999999999px;top:491.88000000000005px;width:50px;text-align:center;color:#e6f0fc;filter:none">08:09</div>
<div class="t" style="left:862.9999999999999px;top:491.88000000000005px;width:50px;text-align:center;color:#e6f0fc;filter:none">07:59</div>
<div class="t" style="left:949.65px;top:491.88000000000005px;width:80px;text-align:center;color:#e6f0fc;filter:none">81:35</div>
<div class="a" style="left:14px;top:519.1px;width:1207px;height:1px;background:#ededed"></div>
<div class="t" style="left:16.2px;top:505.90000000000003px;color:#141414;font-size:10.5px">Chwiałkowska Elżbieta</div>
<div class="a" style="left:147.6px;top:515.3000000000001px;width:2px;height:2px;background:#141414;opacity:0.75"></div>
<div class="a" style="left:152px;top:515.3000000000001px;width:2px;height:2px;background:#141414;opacity:0.75"></div>
<div class="a" style="left:156.4px;top:515.3000000000001px;width:2px;height:2px;background:#141414;opacity:0.75"></div>
<div class="t" style="left:262.4px;top:505.90000000000003px;width:50px;text-align:center;color:#141414">08:04</div>
<div class="t" style="left:312.44999999999993px;top:505.90000000000003px;width:50px;text-align:center;color:#141414">08:10</div>
<div class="t" style="left:362.5px;top:505.90000000000003px;width:50px;text-align:center;color:#141414">08:02</div>
<div class="t" style="left:412.54999999999995px;top:505.90000000000003px;width:50px;text-align:center;color:#141414">08:05</div>
<div class="t" style="left:462.5999999999999px;top:505.90000000000003px;width:50px;text-align:center;color:#141414">08:09</div>
<div class="t" style="left:512.65px;top:505.90000000000003px;width:50px;text-align:center;color:#141414">08:09</div>
<div class="t" style="left:562.6999999999999px;top:505.90000000000003px;width:50px;text-align:center;color:#141414">08:02</div>
<div class="t" style="left:612.75px;top:505.90000000000003px;width:50px;text-align:center;color:#141414">08:08</div>
<div class="t" style="left:762.8999999999999px;top:505.90000000000003px;width:50px;text-align:center;color:#141414">07:56</div>
<div class="t" style="left:812.9499999999999px;top:505.90000000000003px;width:50px;text-align:center;color:#141414">08:15</div>
<div class="t" style="left:862.9999999999999px;top:505.90000000000003px;width:50px;text-align:center;color:#141414">08:11</div>
<div class="t" style="left:949.65px;top:505.90000000000003px;width:80px;text-align:center;color:#141414">73:36</div>
<div class="a" style="left:14px;top:533.12px;width:1207px;height:1px;background:#ededed"></div>
<div class="t" style="left:16.2px;top:519.92px;color:#141414;font-size:10.5px">Chwiałkowska Ewa</div>
<div class="a" style="left:147.6px;top:529.32px;width:2px;height:2px;background:#141414;opacity:0.75"></div>
<div class="a" style="left:152px;top:529.32px;width:2px;height:2px;background:#141414;opacity:0.75"></div>
<div class="a" style="left:156.4px;top:529.32px;width:2px;height:2px;background:#141414;opacity:0.75"></div>
<div class="t" style="left:312.44999999999993px;top:519.92px;width:50px;text-align:center;color:#141414">08:00</div>
<div class="t" style="left:362.5px;top:519.92px;width:50px;text-align:center;color:#141414">08:00</div>
<div class="t" style="left:412.54999999999995px;top:519.92px;width:50px;text-align:center;color:#141414">08:00</div>
<div class="t" style="left:462.5999999999999px;top:519.92px;width:50px;text-align:center;color:#141414">08:01</div>
<div class="t" style="left:512.65px;top:519.92px;width:50px;text-align:center;color:#141414">08:00</div>
<div class="t" style="left:662.8px;top:519.92px;width:50px;text-align:center;color:#141414">08:00</div>
<div class="t" style="left:712.8499999999999px;top:519.92px;width:50px;text-align:center;color:#141414">08:00</div>
<div class="t" style="left:762.8999999999999px;top:519.92px;width:50px;text-align:center;color:#141414">08:00</div>
<div class="t" style="left:812.9499999999999px;top:519.92px;width:50px;text-align:center;color:#141414">06:30</div>
<div class="t" style="left:862.9999999999999px;top:519.92px;width:50px;text-align:center;color:#141414">06:26</div>
<div class="t" style="left:949.65px;top:519.92px;width:80px;text-align:center;color:#141414">77:04</div>
<div class="a" style="left:14px;top:547.14px;width:1207px;height:1px;background:#ededed"></div>
<div class="t" style="left:16.2px;top:533.9399999999999px;color:#141414;font-size:10.5px">Cichoń Zbigniew</div>
<div class="a" style="left:147.6px;top:543.34px;width:2px;height:2px;background:#141414;opacity:0.75"></div>
<div class="a" style="left:152px;top:543.34px;width:2px;height:2px;background:#141414;opacity:0.75"></div>
<div class="a" style="left:156.4px;top:543.34px;width:2px;height:2px;background:#141414;opacity:0.75"></div>
<div class="t" style="left:162.3px;top:533.9399999999999px;width:50px;text-align:center;color:#141414">08:15</div>
<div class="t" style="left:312.44999999999993px;top:533.9399999999999px;width:50px;text-align:center;color:#141414">08:10</div>
<div class="t" style="left:362.5px;top:533.9399999999999px;width:50px;text-align:center;color:#141414">08:12</div>
<div class="t" style="left:412.54999999999995px;top:533.9399999999999px;width:50px;text-align:center;color:#141414">08:09</div>
<div class="t" style="left:462.5999999999999px;top:533.9399999999999px;width:50px;text-align:center;color:#141414">08:13</div>
<div class="t" style="left:512.65px;top:533.9399999999999px;width:50px;text-align:center;color:#141414">08:15</div>
<div class="t" style="left:662.8px;top:533.9399999999999px;width:50px;text-align:center;color:#141414">08:10</div>
<div class="t" style="left:712.8499999999999px;top:533.9399999999999px;width:50px;text-align:center;color:#141414">10:15</div>
<div class="t" style="left:762.8999999999999px;top:533.9399999999999px;width:50px;text-align:center;color:#141414">08:11</div>
<div class="t" style="left:812.9499999999999px;top:533.9399999999999px;width:50px;text-align:center;color:#141414">08:09</div>
<div class="t" style="left:862.9999999999999px;top:533.9399999999999px;width:50px;text-align:center;color:#141414">08:15</div>
<div class="t" style="left:949.65px;top:533.9399999999999px;width:80px;text-align:center;color:#141414">96:26</div>
<div class="a" style="left:14px;top:561.16px;width:1207px;height:1px;background:#ededed"></div>
<div class="t" style="left:16.2px;top:547.9599999999999px;color:#141414;font-size:10.5px">Ciepłota Piotr</div>
<div class="a" style="left:147.6px;top:557.36px;width:2px;height:2px;background:#141414;opacity:0.75"></div>
<div class="a" style="left:152px;top:557.36px;width:2px;height:2px;background:#141414;opacity:0.75"></div>
<div class="a" style="left:156.4px;top:557.36px;width:2px;height:2px;background:#141414;opacity:0.75"></div>
<div class="t" style="left:312.44999999999993px;top:547.9599999999999px;width:50px;text-align:center;color:#141414">09:02</div>
<div class="t" style="left:362.5px;top:547.9599999999999px;width:50px;text-align:center;color:#141414">09:00</div>
<div class="t" style="left:412.54999999999995px;top:547.9599999999999px;width:50px;text-align:center;color:#141414">09:01</div>
<div class="t" style="left:462.5999999999999px;top:547.9599999999999px;width:50px;text-align:center;color:#141414">09:00</div>
<div class="t" style="left:512.65px;top:547.9599999999999px;width:50px;text-align:center;color:#141414">09:01</div>
<div class="t" style="left:662.8px;top:547.9599999999999px;width:50px;text-align:center;color:#141414">09:02</div>
<div class="t" style="left:712.8499999999999px;top:547.9599999999999px;width:50px;text-align:center;color:#141414">08:57</div>
<div class="t" style="left:762.8999999999999px;top:547.9599999999999px;width:50px;text-align:center;color:#141414">09:03</div>
<div class="t" style="left:862.9999999999999px;top:547.9599999999999px;width:50px;text-align:center;color:#141414">09:00</div>
<div class="t" style="left:949.65px;top:547.9599999999999px;width:80px;text-align:center;color:#141414">81:11</div>
<div class="a" style="left:14px;top:575.18px;width:1207px;height:1px;background:#ededed"></div>
<div class="t" style="left:16.2px;top:561.9799999999999px;color:#141414;font-size:10.5px">Cybulska Kamila</div>
<div class="a" style="left:147.6px;top:571.38px;width:2px;height:2px;background:#141414;opacity:0.75"></div>
<div class="a" style="left:152px;top:571.38px;width:2px;height:2px;background:#141414;opacity:0.75"></div>
<div class="a" style="left:156.4px;top:571.38px;width:2px;height:2px;background:#141414;opacity:0.75"></div>
<div class="t" style="left:662.8px;top:561.9799999999999px;width:50px;text-align:center;color:#141414">08:08</div>
<div class="t" style="left:712.8499999999999px;top:561.9799999999999px;width:50px;text-align:center;color:#141414">06:37</div>
<div class="t" style="left:762.8999999999999px;top:561.9799999999999px;width:50px;text-align:center;color:#141414">09:56</div>
<div class="t" style="left:812.9499999999999px;top:561.9799999999999px;width:50px;text-align:center;color:#141414">08:03</div>
<div class="t" style="left:862.9999999999999px;top:561.9799999999999px;width:50px;text-align:center;color:#141414">08:25</div>
<div class="t" style="left:949.65px;top:561.9799999999999px;width:80px;text-align:center;color:#141414">41:09</div>
<div class="a" style="left:14px;top:589.1999999999999px;width:1207px;height:1px;background:#ededed"></div>
<div class="t" style="left:16.2px;top:575.9999999999999px;color:#141414;font-size:10.5px">Czartoryjska-Malinska Adri</div>
<div class="a" style="left:147.6px;top:585.4px;width:2px;height:2px;background:#141414;opacity:0.75"></div>
<div class="a" style="left:152px;top:585.4px;width:2px;height:2px;background:#141414;opacity:0.75"></div>
<div class="a" style="left:156.4px;top:585.4px;width:2px;height:2px;background:#141414;opacity:0.75"></div>
<div class="t" style="left:162.3px;top:575.9999999999999px;width:50px;text-align:center;color:#141414">08:00</div>
<div class="t" style="left:312.44999999999993px;top:575.9999999999999px;width:50px;text-align:center;color:#141414">08:10</div>
<div class="t" style="left:362.5px;top:575.9999999999999px;width:50px;text-align:center;color:#141414">08:15</div>
<div class="t" style="left:412.54999999999995px;top:575.9999999999999px;width:50px;text-align:center;color:#141414">08:12</div>
<div class="t" style="left:462.5999999999999px;top:575.9999999999999px;width:50px;text-align:center;color:#141414">08:15</div>
<div class="t" style="left:512.65px;top:575.9999999999999px;width:50px;text-align:center;color:#141414">08:13</div>
<div class="t" style="left:662.8px;top:575.9999999999999px;width:50px;text-align:center;color:#141414">10:00</div>
<div class="t" style="left:712.8499999999999px;top:575.9999999999999px;width:50px;text-align:center;color:#141414">10:00</div>
<div class="t" style="left:762.8999999999999px;top:575.9999999999999px;width:50px;text-align:center;color:#141414">09:10</div>
<div class="t" style="left:812.9499999999999px;top:575.9999999999999px;width:50px;text-align:center;color:#141414">07:52</div>
<div class="t" style="left:862.9999999999999px;top:575.9999999999999px;width:50px;text-align:center;color:#141414">07:47</div>
<div class="t" style="left:949.65px;top:575.9999999999999px;width:80px;text-align:center;color:#141414">98:06</div>
<div class="a" style="left:14px;top:603.22px;width:1207px;height:1px;background:#ededed"></div>
<div class="t" style="left:16.2px;top:590.02px;color:#141414;font-size:10.5px">Czechowska Edyta</div>
<div class="a" style="left:147.6px;top:599.4200000000001px;width:2px;height:2px;background:#141414;opacity:0.75"></div>
<div class="a" style="left:152px;top:599.4200000000001px;width:2px;height:2px;background:#141414;opacity:0.75"></div>
<div class="a" style="left:156.4px;top:599.4200000000001px;width:2px;height:2px;background:#141414;opacity:0.75"></div>
<div class="t" style="left:162.3px;top:590.02px;width:50px;text-align:center;color:#141414">08:00</div>
<div class="t" style="left:312.44999999999993px;top:590.02px;width:50px;text-align:center;color:#141414">09:30</div>
<div class="t" style="left:362.5px;top:590.02px;width:50px;text-align:center;color:#141414">09:33</div>
<div class="t" style="left:412.54999999999995px;top:590.02px;width:50px;text-align:center;color:#141414">09:25</div>
<div class="t" style="left:462.5999999999999px;top:590.02px;width:50px;text-align:center;color:#141414">08:32</div>
<div class="t" style="left:512.65px;top:590.02px;width:50px;text-align:center;color:#141414">08:00</div>
<div class="t" style="left:662.8px;top:590.02px;width:50px;text-align:center;color:#141414">09:34</div>
<div class="t" style="left:712.8499999999999px;top:590.02px;width:50px;text-align:center;color:#141414">09:28</div>
<div class="t" style="left:762.8999999999999px;top:590.02px;width:50px;text-align:center;color:#141414">09:26</div>
<div class="t" style="left:812.9499999999999px;top:590.02px;width:50px;text-align:center;color:#141414">08:32</div>
<div class="t" style="left:862.9999999999999px;top:590.02px;width:50px;text-align:center;color:#141414">08:00</div>
<div class="t" style="left:949.65px;top:590.02px;width:80px;text-align:center;color:#141414">98:00</div>
<div class="a" style="left:14px;top:617.24px;width:1207px;height:1px;background:#ededed"></div>
<div class="t" style="left:16.2px;top:604.04px;color:#141414;font-size:10.5px">Danych Kamila</div>
<div class="a" style="left:147.6px;top:613.44px;width:2px;height:2px;background:#141414;opacity:0.75"></div>
<div class="a" style="left:152px;top:613.44px;width:2px;height:2px;background:#141414;opacity:0.75"></div>
<div class="a" style="left:156.4px;top:613.44px;width:2px;height:2px;background:#141414;opacity:0.75"></div>
<div class="a" style="left:14px;top:631.26px;width:1207px;height:1px;background:#ededed"></div>
<div class="t" style="left:16.2px;top:618.06px;color:#141414;font-size:10.5px">Dąbek Justyna</div>
<div class="a" style="left:147.6px;top:627.46px;width:2px;height:2px;background:#141414;opacity:0.75"></div>
<div class="a" style="left:152px;top:627.46px;width:2px;height:2px;background:#141414;opacity:0.75"></div>
<div class="a" style="left:156.4px;top:627.46px;width:2px;height:2px;background:#141414;opacity:0.75"></div>
<div class="t" style="left:162.3px;top:618.06px;width:50px;text-align:center;color:#141414">07:58</div>
<div class="t" style="left:312.44999999999993px;top:618.06px;width:50px;text-align:center;color:#141414">08:03</div>
<div class="t" style="left:362.5px;top:618.06px;width:50px;text-align:center;color:#141414">07:09</div>
<div class="t" style="left:412.54999999999995px;top:618.06px;width:50px;text-align:center;color:#141414">08:07</div>
<div class="t" style="left:462.5999999999999px;top:618.06px;width:50px;text-align:center;color:#141414">08:14</div>
<div class="t" style="left:512.65px;top:618.06px;width:50px;text-align:center;color:#141414">07:56</div>
<div class="t" style="left:949.65px;top:618.06px;width:80px;text-align:center;color:#141414">47:27</div>
<div class="a" style="left:14px;top:645.28px;width:1207px;height:1px;background:#ededed"></div>
<div class="t" style="left:16.2px;top:632.0799999999999px;color:#141414;font-size:10.5px">Dąbrowska Małgorzata</div>
<div class="a" style="left:147.6px;top:641.48px;width:2px;height:2px;background:#141414;opacity:0.75"></div>
<div class="a" style="left:152px;top:641.48px;width:2px;height:2px;background:#141414;opacity:0.75"></div>
<div class="a" style="left:156.4px;top:641.48px;width:2px;height:2px;background:#141414;opacity:0.75"></div>
<div class="a" style="left:14px;top:659.3px;width:1207px;height:1px;background:#ededed"></div>
<div class="t" style="left:16.2px;top:646.0999999999999px;color:#141414;font-size:10.5px">Dądziak Patrycja</div>
<div class="a" style="left:147.6px;top:655.5px;width:2px;height:2px;background:#141414;opacity:0.75"></div>
<div class="a" style="left:152px;top:655.5px;width:2px;height:2px;background:#141414;opacity:0.75"></div>
<div class="a" style="left:156.4px;top:655.5px;width:2px;height:2px;background:#141414;opacity:0.75"></div>
<div class="t" style="left:162.3px;top:646.0999999999999px;width:50px;text-align:center;color:#141414">08:00</div>
<div class="t" style="left:312.44999999999993px;top:646.0999999999999px;width:50px;text-align:center;color:#141414">09:02</div>
<div class="t" style="left:362.5px;top:646.0999999999999px;width:50px;text-align:center;color:#141414">10:01</div>
<div class="t" style="left:412.54999999999995px;top:646.0999999999999px;width:50px;text-align:center;color:#141414">08:00</div>
<div class="t" style="left:462.5999999999999px;top:646.0999999999999px;width:50px;text-align:center;color:#141414">09:00</div>
<div class="t" style="left:512.65px;top:646.0999999999999px;width:50px;text-align:center;color:#141414">08:59</div>
<div class="t" style="left:662.8px;top:646.0999999999999px;width:50px;text-align:center;color:#141414">09:00</div>
<div class="t" style="left:712.8499999999999px;top:646.0999999999999px;width:50px;text-align:center;color:#141414">09:00</div>
<div class="t" style="left:762.8999999999999px;top:646.0999999999999px;width:50px;text-align:center;color:#141414">09:02</div>
<div class="t" style="left:812.9499999999999px;top:646.0999999999999px;width:50px;text-align:center;color:#141414">09:00</div>
<div class="t" style="left:862.9999999999999px;top:646.0999999999999px;width:50px;text-align:center;color:#141414">09:02</div>
<div class="t" style="left:949.65px;top:646.0999999999999px;width:80px;text-align:center;color:#141414">98:06</div>
<div class="a" style="left:14px;top:673.3199999999999px;width:1207px;height:1px;background:#ededed"></div>
<div class="t" style="left:16.2px;top:660.1199999999999px;color:#141414;font-size:10.5px">Demczuk Andrzej</div>
<div class="a" style="left:147.6px;top:669.52px;width:2px;height:2px;background:#141414;opacity:0.75"></div>
<div class="a" style="left:152px;top:669.52px;width:2px;height:2px;background:#141414;opacity:0.75"></div>
<div class="a" style="left:156.4px;top:669.52px;width:2px;height:2px;background:#141414;opacity:0.75"></div>
<div class="a" style="left:14px;top:687.34px;width:1207px;height:1px;background:#ededed"></div>
<div class="t" style="left:16.2px;top:674.14px;color:#141414;font-size:10.5px">Denderski Bogusław</div>
<div class="a" style="left:147.6px;top:683.5400000000001px;width:2px;height:2px;background:#141414;opacity:0.75"></div>
<div class="a" style="left:152px;top:683.5400000000001px;width:2px;height:2px;background:#141414;opacity:0.75"></div>
<div class="a" style="left:156.4px;top:683.5400000000001px;width:2px;height:2px;background:#141414;opacity:0.75"></div>
<div class="t" style="left:162.3px;top:674.14px;width:50px;text-align:center;color:#141414">08:13</div>
<div class="t" style="left:362.5px;top:674.14px;width:50px;text-align:center;color:#141414">08:43</div>
<div class="t" style="left:412.54999999999995px;top:674.14px;width:50px;text-align:center;color:#141414">08:07</div>
<div class="t" style="left:462.5999999999999px;top:674.14px;width:50px;text-align:center;color:#141414">08:18</div>
<div class="t" style="left:512.65px;top:674.14px;width:50px;text-align:center;color:#141414">08:53</div>
<div class="t" style="left:662.8px;top:674.14px;width:50px;text-align:center;color:#141414">08:05</div>
<div class="t" style="left:712.8499999999999px;top:674.14px;width:50px;text-align:center;color:#141414">08:34</div>
<div class="t" style="left:762.8999999999999px;top:674.14px;width:50px;text-align:center;color:#141414">08:05</div>
<div class="t" style="left:812.9499999999999px;top:674.14px;width:50px;text-align:center;color:#141414">08:03</div>
<div class="t" style="left:862.9999999999999px;top:674.14px;width:50px;text-align:center;color:#141414">08:33</div>
<div class="t" style="left:949.65px;top:674.14px;width:80px;text-align:center;color:#141414">83:34</div>
<div class="a" style="left:14px;top:701.36px;width:1207px;height:1px;background:#ededed"></div>
<div class="t" style="left:16.2px;top:688.16px;color:#141414;font-size:10.5px">Dębski Mariusz</div>
<div class="a" style="left:147.6px;top:697.5600000000001px;width:2px;height:2px;background:#141414;opacity:0.75"></div>
<div class="a" style="left:152px;top:697.5600000000001px;width:2px;height:2px;background:#141414;opacity:0.75"></div>
<div class="a" style="left:156.4px;top:697.5600000000001px;width:2px;height:2px;background:#141414;opacity:0.75"></div>
<div class="t" style="left:162.3px;top:688.16px;width:50px;text-align:center;color:#141414">08:00</div>
<div class="t" style="left:312.44999999999993px;top:688.16px;width:50px;text-align:center;color:#141414">07:59</div>
<div class="t" style="left:362.5px;top:688.16px;width:50px;text-align:center;color:#141414">08:00</div>
<div class="t" style="left:412.54999999999995px;top:688.16px;width:50px;text-align:center;color:#141414">08:00</div>
<div class="t" style="left:462.5999999999999px;top:688.16px;width:50px;text-align:center;color:#141414">08:00</div>
<div class="t" style="left:512.65px;top:688.16px;width:50px;text-align:center;color:#141414">08:00</div>
<div class="t" style="left:662.8px;top:688.16px;width:50px;text-align:center;color:#141414">08:01</div>
<div class="t" style="left:712.8499999999999px;top:688.16px;width:50px;text-align:center;color:#141414">08:00</div>
<div class="t" style="left:762.8999999999999px;top:688.16px;width:50px;text-align:center;color:#141414">08:00</div>
<div class="t" style="left:812.9499999999999px;top:688.16px;width:50px;text-align:center;color:#141414">08:11</div>
<div class="t" style="left:862.9999999999999px;top:688.16px;width:50px;text-align:center;color:#141414">08:00</div>
<div class="t" style="left:949.65px;top:688.16px;width:80px;text-align:center;color:#141414">88:11</div>
<div class="a" style="left:14px;top:715.38px;width:1207px;height:1px;background:#ededed"></div>
<div class="t" style="left:16.2px;top:702.18px;color:#141414;font-size:10.5px">Dobrzyński Mariusz</div>
<div class="a" style="left:147.6px;top:711.58px;width:2px;height:2px;background:#141414;opacity:0.75"></div>
<div class="a" style="left:152px;top:711.58px;width:2px;height:2px;background:#141414;opacity:0.75"></div>
<div class="a" style="left:156.4px;top:711.58px;width:2px;height:2px;background:#141414;opacity:0.75"></div>
<div class="t" style="left:162.3px;top:702.18px;width:50px;text-align:center;color:#141414">07:56</div>
<div class="t" style="left:312.44999999999993px;top:702.18px;width:50px;text-align:center;color:#141414">07:46</div>
<div class="t" style="left:362.5px;top:702.18px;width:50px;text-align:center;color:#141414">08:05</div>
<div class="t" style="left:412.54999999999995px;top:702.18px;width:50px;text-align:center;color:#141414">08:17</div>
<div class="t" style="left:462.5999999999999px;top:702.18px;width:50px;text-align:center;color:#141414">08:02</div>
<div class="t" style="left:512.65px;top:702.18px;width:50px;text-align:center;color:#141414">07:59</div>
<div class="t" style="left:662.8px;top:702.18px;width:50px;text-align:center;color:#141414">07:51</div>
<div class="t" style="left:712.8499999999999px;top:702.18px;width:50px;text-align:center;color:#141414">00:11</div>
<div class="t" style="left:762.8999999999999px;top:702.18px;width:50px;text-align:center;color:#141414">08:04</div>
<div class="t" style="left:812.9499999999999px;top:702.18px;width:50px;text-align:center;color:#141414">07:47</div>
<div class="t" style="left:862.9999999999999px;top:702.18px;width:50px;text-align:center;color:#141414">08:09</div>
<div class="t" style="left:949.65px;top:702.18px;width:80px;text-align:center;color:#141414">80:07</div>
<div class="a" style="left:14px;top:729.4px;width:1207px;height:1px;background:#ededed"></div>
<div class="t" style="left:16.2px;top:716.1999999999999px;color:#141414;font-size:10.5px">Domowicz Tomasz</div>
<div class="a" style="left:147.6px;top:725.6px;width:2px;height:2px;background:#141414;opacity:0.75"></div>
<div class="a" style="left:152px;top:725.6px;width:2px;height:2px;background:#141414;opacity:0.75"></div>
<div class="a" style="left:156.4px;top:725.6px;width:2px;height:2px;background:#141414;opacity:0.75"></div>
<div class="t" style="left:162.3px;top:716.1999999999999px;width:50px;text-align:center;color:#141414">06:44</div>
<div class="t" style="left:312.44999999999993px;top:716.1999999999999px;width:50px;text-align:center;color:#141414">07:53</div>
<div class="t" style="left:362.5px;top:716.1999999999999px;width:50px;text-align:center;color:#141414">07:57</div>
<div class="t" style="left:412.54999999999995px;top:716.1999999999999px;width:50px;text-align:center;color:#141414">08:06</div>
<div class="t" style="left:462.5999999999999px;top:716.1999999999999px;width:50px;text-align:center;color:#141414">08:02</div>
<div class="t" style="left:512.65px;top:716.1999999999999px;width:50px;text-align:center;color:#141414">06:39</div>
<div class="t" style="left:662.8px;top:716.1999999999999px;width:50px;text-align:center;color:#141414">08:02</div>
<div class="t" style="left:712.8499999999999px;top:716.1999999999999px;width:50px;text-align:center;color:#141414">08:11</div>
<div class="t" style="left:762.8999999999999px;top:716.1999999999999px;width:50px;text-align:center;color:#141414">08:07</div>
<div class="t" style="left:812.9499999999999px;top:716.1999999999999px;width:50px;text-align:center;color:#141414">08:38</div>
<div class="t" style="left:862.9999999999999px;top:716.1999999999999px;width:50px;text-align:center;color:#141414">07:18</div>
<div class="t" style="left:949.65px;top:716.1999999999999px;width:80px;text-align:center;color:#141414">85:37</div>
<div class="a" style="left:14px;top:743.42px;width:1207px;height:1px;background:#ededed"></div>
<div class="t" style="left:16.2px;top:730.2199999999999px;color:#141414;font-size:10.5px">Doruch Paulina</div>
<div class="a" style="left:147.6px;top:739.62px;width:2px;height:2px;background:#141414;opacity:0.75"></div>
<div class="a" style="left:152px;top:739.62px;width:2px;height:2px;background:#141414;opacity:0.75"></div>
<div class="a" style="left:156.4px;top:739.62px;width:2px;height:2px;background:#141414;opacity:0.75"></div>
<div class="t" style="left:162.3px;top:730.2199999999999px;width:50px;text-align:center;color:#141414">08:00</div>
<div class="t" style="left:949.65px;top:730.2199999999999px;width:80px;text-align:center;color:#141414">08:00</div>
<div class="a" style="left:14px;top:757.44px;width:1207px;height:1px;background:#ededed"></div>
<div class="t" style="left:16.2px;top:744.24px;color:#141414;font-size:10.5px">Drabek Małgorzata</div>
<div class="a" style="left:147.6px;top:753.6400000000001px;width:2px;height:2px;background:#141414;opacity:0.75"></div>
<div class="a" style="left:152px;top:753.6400000000001px;width:2px;height:2px;background:#141414;opacity:0.75"></div>
<div class="a" style="left:156.4px;top:753.6400000000001px;width:2px;height:2px;background:#141414;opacity:0.75"></div>
<div class="t" style="left:162.3px;top:744.24px;width:50px;text-align:center;color:#141414">08:05</div>
<div class="t" style="left:312.44999999999993px;top:744.24px;width:50px;text-align:center;color:#141414">08:04</div>
<div class="t" style="left:362.5px;top:744.24px;width:50px;text-align:center;color:#141414">07:57</div>
<div class="t" style="left:412.54999999999995px;top:744.24px;width:50px;text-align:center;color:#141414">08:02</div>
<div class="t" style="left:462.5999999999999px;top:744.24px;width:50px;text-align:center;color:#141414">08:06</div>
<div class="t" style="left:512.65px;top:744.24px;width:50px;text-align:center;color:#141414">08:07</div>
<div class="t" style="left:662.8px;top:744.24px;width:50px;text-align:center;color:#141414">08:07</div>
<div class="t" style="left:712.8499999999999px;top:744.24px;width:50px;text-align:center;color:#141414">08:06</div>
<div class="t" style="left:762.8999999999999px;top:744.24px;width:50px;text-align:center;color:#141414">08:32</div>
<div class="t" style="left:812.9499999999999px;top:744.24px;width:50px;text-align:center;color:#141414">07:49</div>
<div class="t" style="left:862.9999999999999px;top:744.24px;width:50px;text-align:center;color:#141414">08:29</div>
<div class="t" style="left:949.65px;top:744.24px;width:80px;text-align:center;color:#141414">89:24</div>
<div class="a" style="left:14px;top:771.46px;width:1207px;height:1px;background:#ededed"></div>
<div class="t" style="left:16.2px;top:758.26px;color:#141414;font-size:10.5px">Drożdżowska Ewa</div>
<div class="a" style="left:147.6px;top:767.6600000000001px;width:2px;height:2px;background:#141414;opacity:0.75"></div>
<div class="a" style="left:152px;top:767.6600000000001px;width:2px;height:2px;background:#141414;opacity:0.75"></div>
<div class="a" style="left:156.4px;top:767.6600000000001px;width:2px;height:2px;background:#141414;opacity:0.75"></div>
<div class="t" style="left:162.3px;top:758.26px;width:50px;text-align:center;color:#141414">08:01</div>
<div class="t" style="left:312.44999999999993px;top:758.26px;width:50px;text-align:center;color:#141414">09:04</div>
<div class="t" style="left:362.5px;top:758.26px;width:50px;text-align:center;color:#141414">09:00</div>
<div class="t" style="left:412.54999999999995px;top:758.26px;width:50px;text-align:center;color:#141414">09:04</div>
<div class="t" style="left:662.8px;top:758.26px;width:50px;text-align:center;color:#141414">08:59</div>
<div class="t" style="left:712.8499999999999px;top:758.26px;width:50px;text-align:center;color:#141414">08:00</div>
<div class="t" style="left:762.8999999999999px;top:758.26px;width:50px;text-align:center;color:#141414">09:01</div>
<div class="t" style="left:812.9499999999999px;top:758.26px;width:50px;text-align:center;color:#141414">08:00</div>
<div class="t" style="left:862.9999999999999px;top:758.26px;width:50px;text-align:center;color:#141414">08:00</div>
<div class="t" style="left:949.65px;top:758.26px;width:80px;text-align:center;color:#141414">77:09</div>
<div class="a" style="left:14px;top:785.48px;width:1207px;height:1px;background:#ededed"></div>
<div class="t" style="left:16.2px;top:772.28px;color:#141414;font-size:10.5px">Dróżdż Paulina</div>
<div class="a" style="left:147.6px;top:781.6800000000001px;width:2px;height:2px;background:#141414;opacity:0.75"></div>
<div class="a" style="left:152px;top:781.6800000000001px;width:2px;height:2px;background:#141414;opacity:0.75"></div>
<div class="a" style="left:156.4px;top:781.6800000000001px;width:2px;height:2px;background:#141414;opacity:0.75"></div>
<div class="t" style="left:162.3px;top:772.28px;width:50px;text-align:center;color:#141414">08:02</div>
<div class="t" style="left:312.44999999999993px;top:772.28px;width:50px;text-align:center;color:#141414">07:52</div>
<div class="t" style="left:362.5px;top:772.28px;width:50px;text-align:center;color:#141414">09:03</div>
<div class="t" style="left:412.54999999999995px;top:772.28px;width:50px;text-align:center;color:#141414">09:02</div>
<div class="t" style="left:462.5999999999999px;top:772.28px;width:50px;text-align:center;color:#141414">08:57</div>
<div class="t" style="left:512.65px;top:772.28px;width:50px;text-align:center;color:#141414">09:02</div>
<div class="t" style="left:662.8px;top:772.28px;width:50px;text-align:center;color:#141414">08:01</div>
<div class="t" style="left:762.8999999999999px;top:772.28px;width:50px;text-align:center;color:#141414">07:57</div>
<div class="t" style="left:812.9499999999999px;top:772.28px;width:50px;text-align:center;color:#141414">08:05</div>
<div class="t" style="left:862.9999999999999px;top:772.28px;width:50px;text-align:center;color:#141414">08:00</div>
<div class="t" style="left:949.65px;top:772.28px;width:80px;text-align:center;color:#141414">84:01</div>
<div class="a" style="left:14px;top:799.5px;width:1207px;height:1px;background:#ededed"></div>
<div class="t" style="left:16.2px;top:786.3px;color:#141414;font-size:10.5px">Drwalewski Maciej</div>
<div class="a" style="left:147.6px;top:795.7px;width:2px;height:2px;background:#141414;opacity:0.75"></div>
<div class="a" style="left:152px;top:795.7px;width:2px;height:2px;background:#141414;opacity:0.75"></div>
<div class="a" style="left:156.4px;top:795.7px;width:2px;height:2px;background:#141414;opacity:0.75"></div>
<div class="t" style="left:162.3px;top:786.3px;width:50px;text-align:center;color:#141414">08:01</div>
<div class="t" style="left:312.44999999999993px;top:786.3px;width:50px;text-align:center;color:#141414">09:01</div>
<div class="t" style="left:362.5px;top:786.3px;width:50px;text-align:center;color:#141414">08:58</div>
<div class="t" style="left:412.54999999999995px;top:786.3px;width:50px;text-align:center;color:#141414">09:02</div>
<div class="t" style="left:462.5999999999999px;top:786.3px;width:50px;text-align:center;color:#141414">08:59</div>
<div class="t" style="left:512.65px;top:786.3px;width:50px;text-align:center;color:#141414">09:03</div>
<div class="t" style="left:662.8px;top:786.3px;width:50px;text-align:center;color:#141414">08:57</div>
<div class="t" style="left:712.8499999999999px;top:786.3px;width:50px;text-align:center;color:#141414">08:59</div>
<div class="t" style="left:762.8999999999999px;top:786.3px;width:50px;text-align:center;color:#141414">09:00</div>
<div class="t" style="left:812.9499999999999px;top:786.3px;width:50px;text-align:center;color:#141414">09:01</div>
<div class="t" style="left:862.9999999999999px;top:786.3px;width:50px;text-align:center;color:#141414">09:00</div>
<div class="t" style="left:949.65px;top:786.3px;width:80px;text-align:center;color:#141414">98:01</div>
<div class="a" style="left:14px;top:813.52px;width:1207px;height:1px;background:#ededed"></div>
<div class="t" style="left:16.2px;top:800.3199999999999px;color:#141414;font-size:10.5px">Dziewior Marek</div>
<div class="a" style="left:147.6px;top:809.72px;width:2px;height:2px;background:#141414;opacity:0.75"></div>
<div class="a" style="left:152px;top:809.72px;width:2px;height:2px;background:#141414;opacity:0.75"></div>
<div class="a" style="left:156.4px;top:809.72px;width:2px;height:2px;background:#141414;opacity:0.75"></div>
<div class="t" style="left:162.3px;top:800.3199999999999px;width:50px;text-align:center;color:#141414">05:17</div>
<div class="t" style="left:312.44999999999993px;top:800.3199999999999px;width:50px;text-align:center;color:#141414">08:24</div>
<div class="t" style="left:362.5px;top:800.3199999999999px;width:50px;text-align:center;color:#141414">08:17</div>
<div class="t" style="left:412.54999999999995px;top:800.3199999999999px;width:50px;text-align:center;color:#141414">07:53</div>
<div class="t" style="left:462.5999999999999px;top:800.3199999999999px;width:50px;text-align:center;color:#141414">08:13</div>
<div class="t" style="left:512.65px;top:800.3199999999999px;width:50px;text-align:center;color:#141414">07:59</div>
<div class="t" style="left:662.8px;top:800.3199999999999px;width:50px;text-align:center;color:#141414">07:38</div>
<div class="t" style="left:712.8499999999999px;top:800.3199999999999px;width:50px;text-align:center;color:#141414">08:01</div>
<div class="t" style="left:762.8999999999999px;top:800.3199999999999px;width:50px;text-align:center;color:#141414">07:54</div>
<div class="t" style="left:812.9499999999999px;top:800.3199999999999px;width:50px;text-align:center;color:#141414">07:32</div>
<div class="t" style="left:862.9999999999999px;top:800.3199999999999px;width:50px;text-align:center;color:#141414">08:07</div>
<div class="t" style="left:949.65px;top:800.3199999999999px;width:80px;text-align:center;color:#141414">85:15</div>
<div class="a" style="left:14px;top:827.54px;width:1207px;height:1px;background:#ededed"></div>
<div class="t" style="left:16.2px;top:814.3399999999999px;color:#141414;font-size:10.5px">Fałkowska Katarzyna</div>
<div class="a" style="left:147.6px;top:823.74px;width:2px;height:2px;background:#141414;opacity:0.75"></div>
<div class="a" style="left:152px;top:823.74px;width:2px;height:2px;background:#141414;opacity:0.75"></div>
<div class="a" style="left:156.4px;top:823.74px;width:2px;height:2px;background:#141414;opacity:0.75"></div>
<div class="t" style="left:712.8499999999999px;top:814.3399999999999px;width:50px;text-align:center;color:#141414">08:07</div>
<div class="t" style="left:762.8999999999999px;top:814.3399999999999px;width:50px;text-align:center;color:#141414">09:04</div>
<div class="t" style="left:812.9499999999999px;top:814.3399999999999px;width:50px;text-align:center;color:#141414">07:44</div>
<div class="t" style="left:862.9999999999999px;top:814.3399999999999px;width:50px;text-align:center;color:#141414">07:51</div>
<div class="t" style="left:949.65px;top:814.3399999999999px;width:80px;text-align:center;color:#141414">32:46</div>
<div class="a" style="left:14px;top:841.5600000000001px;width:1207px;height:1px;background:#ededed"></div>
<div class="t" style="left:16.2px;top:828.36px;color:#141414;font-size:10.5px">Fastyn Paulina</div>
<div class="a" style="left:147.6px;top:837.7600000000001px;width:2px;height:2px;background:#141414;opacity:0.75"></div>
<div class="a" style="left:152px;top:837.7600000000001px;width:2px;height:2px;background:#141414;opacity:0.75"></div>
<div class="a" style="left:156.4px;top:837.7600000000001px;width:2px;height:2px;background:#141414;opacity:0.75"></div>
<div class="a" style="left:14px;top:855.58px;width:1207px;height:1px;background:#ededed"></div>
<div class="t" style="left:16.2px;top:842.38px;color:#141414;font-size:10.5px">Federowicz Katarzyna</div>
<div class="a" style="left:147.6px;top:851.7800000000001px;width:2px;height:2px;background:#141414;opacity:0.75"></div>
<div class="a" style="left:152px;top:851.7800000000001px;width:2px;height:2px;background:#141414;opacity:0.75"></div>
<div class="a" style="left:156.4px;top:851.7800000000001px;width:2px;height:2px;background:#141414;opacity:0.75"></div>
<div class="t" style="left:162.3px;top:842.38px;width:50px;text-align:center;color:#141414">07:55</div>
<div class="t" style="left:362.5px;top:842.38px;width:50px;text-align:center;color:#141414">08:07</div>
<div class="t" style="left:412.54999999999995px;top:842.38px;width:50px;text-align:center;color:#141414">07:45</div>
<div class="t" style="left:462.5999999999999px;top:842.38px;width:50px;text-align:center;color:#141414">08:13</div>
<div class="t" style="left:512.65px;top:842.38px;width:50px;text-align:center;color:#141414">07:56</div>
<div class="t" style="left:662.8px;top:842.38px;width:50px;text-align:center;color:#141414">07:55</div>
<div class="t" style="left:712.8499999999999px;top:842.38px;width:50px;text-align:center;color:#141414">08:02</div>
<div class="t" style="left:762.8999999999999px;top:842.38px;width:50px;text-align:center;color:#141414">08:06</div>
<div class="t" style="left:812.9499999999999px;top:842.38px;width:50px;text-align:center;color:#141414">07:14</div>
<div class="t" style="left:862.9999999999999px;top:842.38px;width:50px;text-align:center;color:#141414">08:16</div>
<div class="t" style="left:949.65px;top:842.38px;width:80px;text-align:center;color:#141414">79:29</div>
<div class="a" style="left:14px;top:869.6px;width:1207px;height:1px;background:#ededed"></div>
<div class="t" style="left:16.2px;top:856.4px;color:#141414;font-size:10.5px">Figlewska Aleksandra</div>
<div class="a" style="left:147.6px;top:865.8000000000001px;width:2px;height:2px;background:#141414;opacity:0.75"></div>
<div class="a" style="left:152px;top:865.8000000000001px;width:2px;height:2px;background:#141414;opacity:0.75"></div>
<div class="a" style="left:156.4px;top:865.8000000000001px;width:2px;height:2px;background:#141414;opacity:0.75"></div>
<div class="t" style="left:212.35px;top:856.4px;width:50px;text-align:center;color:#141414">07:36</div>
<div class="t" style="left:462.5999999999999px;top:856.4px;width:50px;text-align:center;color:#141414">08:57</div>
<div class="t" style="left:512.65px;top:856.4px;width:50px;text-align:center;color:#141414">08:50</div>
<div class="t" style="left:712.8499999999999px;top:856.4px;width:50px;text-align:center;color:#141414">08:07</div>
<div class="t" style="left:862.9999999999999px;top:856.4px;width:50px;text-align:center;color:#141414">08:10</div>
<div class="t" style="left:949.65px;top:856.4px;width:80px;text-align:center;color:#141414">81:06</div>
<div class="a" style="left:162.9px;top:153px;width:1px;height:708px;background:#ededed"></div>
<div class="a" style="left:212.95px;top:153px;width:1px;height:708px;background:#ededed"></div>
<div class="a" style="left:263.0px;top:153px;width:1px;height:708px;background:#ededed"></div>
<div class="a" style="left:313.04999999999995px;top:153px;width:1px;height:708px;background:#ededed"></div>
<div class="a" style="left:363.1px;top:153px;width:1px;height:708px;background:#ededed"></div>
<div class="a" style="left:413.15px;top:153px;width:1px;height:708px;background:#ededed"></div>
<div class="a" style="left:463.19999999999993px;top:153px;width:1px;height:708px;background:#ededed"></div>
<div class="a" style="left:513.25px;top:153px;width:1px;height:708px;background:#ededed"></div>
<div class="a" style="left:563.3px;top:153px;width:1px;height:708px;background:#ededed"></div>
<div class="a" style="left:613.35px;top:153px;width:1px;height:708px;background:#ededed"></div>
<div class="a" style="left:663.4px;top:153px;width:1px;height:708px;background:#ededed"></div>
<div class="a" style="left:713.4499999999999px;top:153px;width:1px;height:708px;background:#ededed"></div>
<div class="a" style="left:763.4999999999999px;top:153px;width:1px;height:708px;background:#ededed"></div>
<div class="a" style="left:813.55px;top:153px;width:1px;height:708px;background:#ededed"></div>
<div class="a" style="left:863.5999999999999px;top:153px;width:1px;height:708px;background:#ededed"></div>
<div class="a" style="left:913.65px;top:153px;width:1px;height:708px;background:#ededed"></div>
<div class="a" style="left:1063px;top:153px;width:1px;height:708px;background:#ededed"></div>
<div class="a" style="left:1221px;top:135px;width:17px;height:726px;background:#f0f0f0;border-left:1px solid #e8e8e8"></div>
<div class="a" style="left:1222px;top:135px;width:16px;height:2px;background:#b0b0b0"></div>
<svg class="a" style="left:1226px;top:141px" width="8" height="5" viewBox="0 0 8 5"><path d="M0.5 4.5 L4 1 L7.5 4.5 Z" fill="#303030"/></svg>
<div class="a" style="left:1223px;top:154px;width:14px;height:141px;border:1px solid #a8a8a8;border-radius:2px;background:linear-gradient(90deg,#f4f4f4,#e6e6e6 50%,#d8d8d8)"></div>
<div class="a" style="left:1227px;top:220px;width:7px;height:8px;background:repeating-linear-gradient(#606060 0 1px,#f0f0f0 1px 2px)"></div>
<svg class="a" style="left:1226px;top:850px" width="8" height="5" viewBox="0 0 8 5"><path d="M0.5 0.5 L4 4 L7.5 0.5 Z" fill="#303030"/></svg>
<div class="a" style="left:289px;top:507px;width:208px;height:84px;background:rgba(0,0,0,0.10);border-radius:3px;filter:blur(1px)"></div>
<div class="a" style="left:288px;top:506px;width:208px;height:83px;background:rgba(0,0,0,0.16);border-radius:2px"></div>
<div class="a" style="left:286px;top:504px;width:208px;height:83px;background:#f0f0f0;border:1px solid #979797"></div>
<div class="a" style="left:289px;top:546px;width:202px;height:1px;background:#d4d4d4"></div>
<div class="a" style="left:289px;top:547px;width:201px;height:1px;background:#ffffff"></div>
<div class="a" style="left:289px;top:550px;width:203px;height:35px;background:#3598fa"></div>
<div class="a" style="left:290px;top:508px;width:32px;height:32px"><svg width="32" height="32" viewBox="0 0 32 32">
<defs><linearGradient id="cb2" x1="0" y1="0" x2="0" y2="1"><stop offset="0" stop-color="#6f9cf0"/><stop offset="1" stop-color="#2a56c8"/></linearGradient>
<linearGradient id="cw2" x1="1" y1="0" x2="0" y2="1"><stop offset="0" stop-color="#ffffff"/><stop offset="0.5" stop-color="#f2f6fe"/><stop offset="1" stop-color="#a8c4f0"/></linearGradient></defs>
<path d="M1.7 5.5 Q1.7 4.6 2.6 4.4 L28.4 0.2 Q29.4 0.1 29.4 1.1 L29.4 25 Q29.4 25.8 28.6 26 L2.7 30.3 Q1.7 30.4 1.7 29.4 Z" fill="url(#cw2)" stroke="#4a6cc0" stroke-width="0.9"/>
<path d="M1.7 5.5 Q1.7 4.6 2.6 4.4 L28.4 0.2 Q29.4 0.1 29.4 1.1 L29.4 9 L1.7 11.3 Z" fill="url(#cb2)" stroke="#2a4ab0" stroke-width="0.8"/>
<text x="11.5" y="9.2" font-family="Liberation Sans" font-weight="bold" font-size="5.5" fill="#eef4ff" transform="rotate(-8 15 8)">Aug</text>
<text x="8.6" y="24.6" font-family="Liberation Sans" font-weight="bold" font-size="17" fill="#1e2244" transform="rotate(-8 16 20) skewX(-6)" letter-spacing="-1">14</text>
</svg></div>
<div class="t" style="left:333px;top:518px;font-size:11.6px;color:#1e1e1e">Zmień okres zestawienia</div>
<div class="t" style="left:333px;top:561px;font-size:11.6px;color:#d4e8fc;filter:none">Raport do Excell</div>
<div class="a" style="left:9px;top:861px;width:1233px;height:34px;background:#c4c4c4"></div>
<div class="t" style="left:19.5px;top:874.6px;font-size:10px;color:#1e1e1e">KOREKCJA ZDARZEŃ PRACOWNIKA</div>
<div class="t" style="left:219.5px;top:874.6px;font-size:10px;color:#1e1e1e">ZESTAWIENIE DO KOREKCJI</div>
<div class="t" style="left:419.5px;top:874.6px;font-size:10px;color:#1e1e1e">ANALIZA WEJŚĆ PEŁNA</div>
<div class="a" style="left:609px;top:861px;width:204px;height:34px;border-left:2px solid #fff;border-right:2px solid #8a8a8a;border-bottom:2px solid #8a8a8a"></div>
<div class="t" style="left:619.5px;top:874.6px;font-size:10px;color:#1e1e1e">ZESTAWIENIA ZBIORCZE</div>
<div class="t" style="left:819.5px;top:874.6px;font-size:10px;color:#1e1e1e">OBECNI W BUDYNKU</div>
<div class="t" style="left:15px;top:905px;color:#a8a8a8">Szybkie wyszukiwanie:</div>
<div class="a" style="left:132px;top:900px;width:1108px;height:19px;border:2px solid #8c8c8c;border-right-color:#e4e4e4;border-bottom:1px solid #e4e4e4;background:#fff"></div>
<div class="a" style="left:9px;top:926px;width:1233px;height:16px;background:#f0f0f0;border-top:1px solid #b4b4b4"></div>
<svg class="a" style="left:1228px;top:930px" width="13" height="12" viewBox="0 0 13 12"><path d="M12 2 L2 12 M12 6 L6 12 M12 10 L10 12" stroke="#a0a0a0" stroke-width="1.2"/><path d="M12.8 2.8 L2.8 12.8 M12.8 6.8 L6.8 12.8" stroke="#fff" stroke-width="1"/></svg>
<div class="a" style="left:59.5px;top:928px;width:2px;height:14px;background:linear-gradient(90deg,#b0b0b0 50%,#fff 50%)"></div>
<div class="a" style="left:159.5px;top:928px;width:2px;height:14px;background:linear-gradient(90deg,#b0b0b0 50%,#fff 50%)"></div>
<div class="a" style="left:410px;top:928px;width:2px;height:14px;background:linear-gradient(90deg,#b0b0b0 50%,#fff 50%)"></div>
<div class="t" style="left:413px;top:927.5px;color:#1e1e1e;font-size:11.5px;letter-spacing:0.25px">Zalogowany:</div></div></div></body></html>
